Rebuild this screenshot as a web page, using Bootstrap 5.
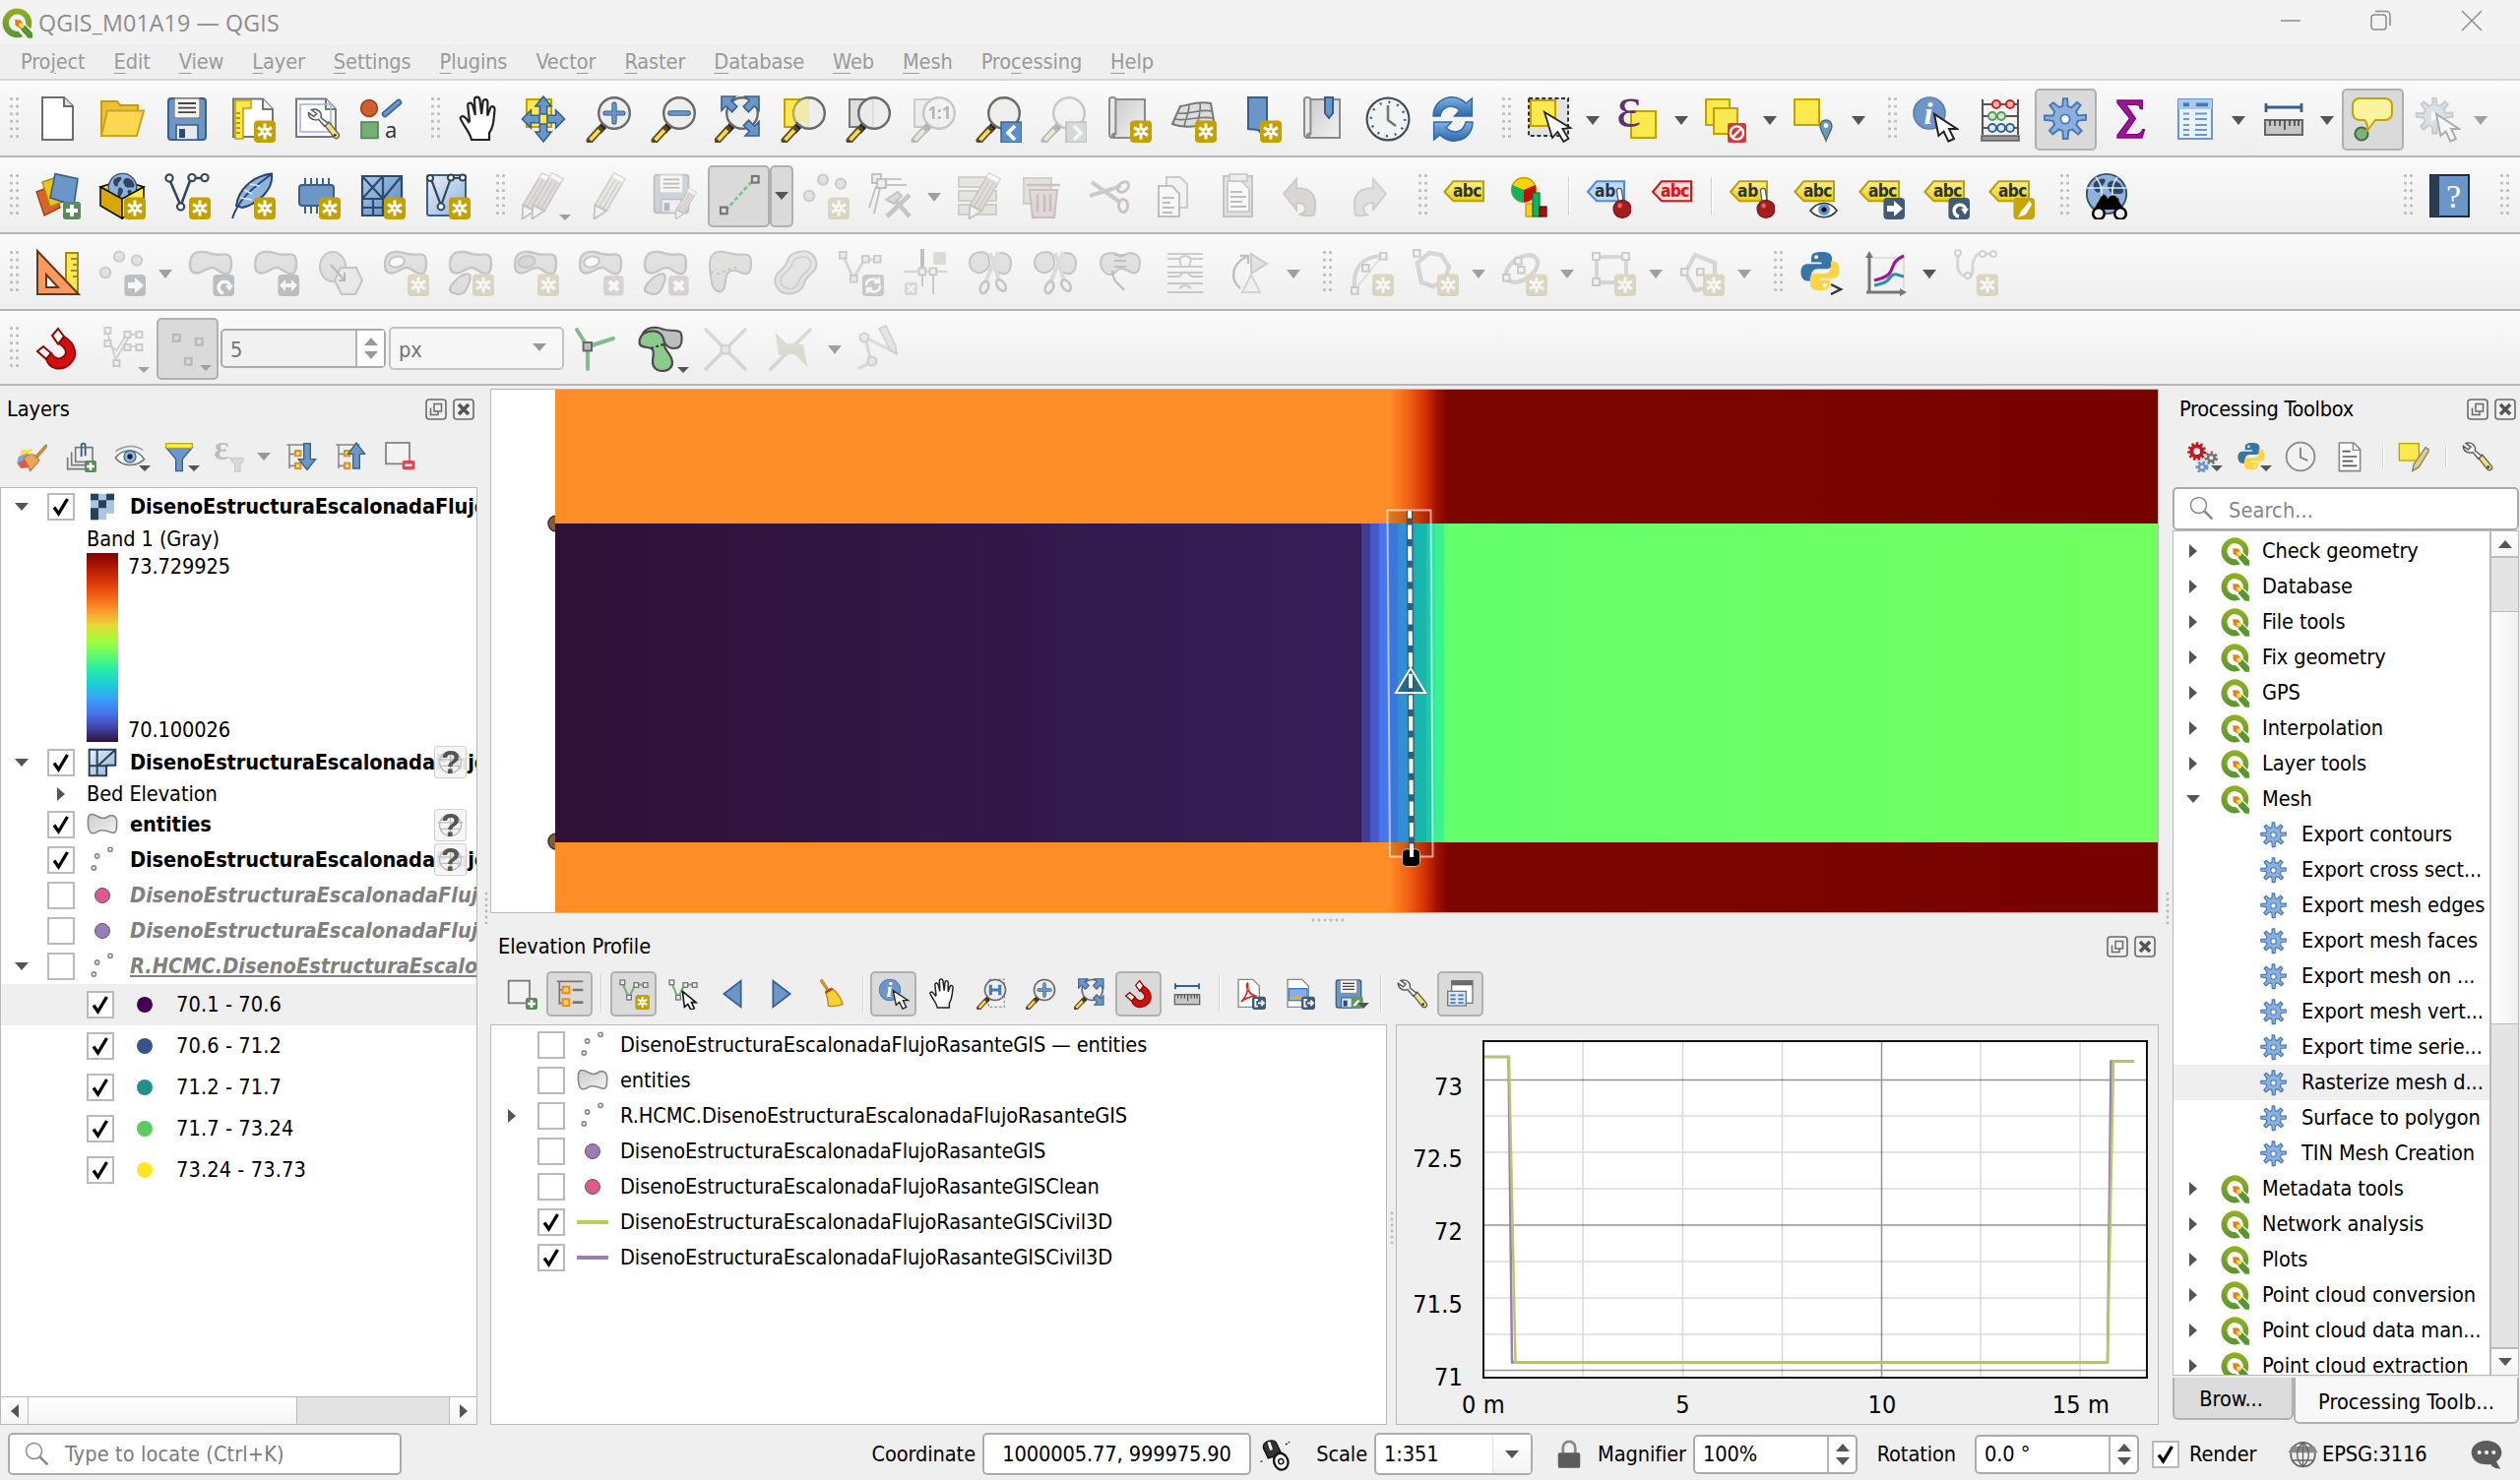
<!DOCTYPE html>
<html lang="en">
<head>
<meta charset="utf-8">
<title>QGIS_M01A19 — QGIS</title>
<link href="https://cdn.jsdelivr.net/npm/bootstrap@5.3.0/dist/css/bootstrap.min.css" rel="stylesheet">
<style>
body{width:2560px;height:1504px;overflow:hidden;background:#efefef;color:#000;font-family:"DejaVu Sans Condensed","DejaVu Sans",sans-serif;font-size:21.6px;line-height:28px;letter-spacing:-.1px}
svg{display:block;flex:none;overflow:visible}
.titlebar{height:45px;background:#f3f3f3;color:#8c8c8c;font:23.2px/30px "Open Sans","Noto Sans",sans-serif;letter-spacing:.15px;padding:1px 0 0 2px}
.winctl{gap:70px;padding-right:38px}
.menubar{height:37px;border-bottom:2px solid #d6d6d6;gap:29px;padding:0 0 0 21px;color:#9a9a9a;letter-spacing:-.12px}
.menubar u{text-underline-offset:4px;text-decoration-thickness:1px}
.tools{height:78px;border-bottom:2px solid #b6b6b6;background:linear-gradient(#fafafa,#eeeeee);padding-top:2px}
.tools.last{height:76px;padding:2px 0 0}
.grip{width:32px;height:44px;flex:none;padding-left:17px}
.grip::before{content:"";display:block;width:9px;height:44px;background:radial-gradient(circle at 1.5px 1.5px,#bdbdbd 1.3px,transparent 1.6px) 0 0/6px 7.6px}
.grip.first{width:25px;padding-left:10px}
.tb{width:66px;height:63px;flex:none;padding:0;border:0;border-radius:0;display:flex;align-items:center;justify-content:center;position:relative}
.tb>svg{width:48px;height:48px}
.tb.dd{width:90px;padding-right:24px}
.tb.dd::after{content:"";border:7.5px solid transparent;border-top:9px solid #555;border-bottom:0;position:absolute;right:6px;top:28px}
.tb.corner::after{content:"";border:6px solid transparent;border-top:6px solid #555;border-bottom:0;position:absolute;right:5px;bottom:7px}
.tb.off>svg{filter:grayscale(.62);opacity:.33}
.tb.off::after{border-top-color:#a0a0a0!important}
.tb.on,.mini.on{background:#dadada;border:2px solid #b0b0b0;border-radius:5px}
.tb.on{width:63px;margin:0 1.5px}
.vsep{width:2px;height:38px;background:#d2d2d2;border-right:1px solid #fff;margin:0 5.5px;flex:none}
.field{background:#fff;border:2px solid #ababab;border-radius:5px;display:flex;align-items:center;flex:none}
.spin{width:29px;align-self:stretch;border-left:2px solid #b5b5b5;display:flex;flex-direction:column;align-items:center;justify-content:center;gap:6px}
.up,.dn,.rt,.lf{width:0;height:0;display:block;flex:none;border:7px solid transparent}
.up{border-top:0;border-bottom:8px solid #555}.dn{border-bottom:0;border-top:8px solid #555}
.rt{border-right:0;border-left:8px solid #555}.lf{border-left:0;border-right:8px solid #555}
.mute .up{border-bottom-color:#999}.mute .dn{border-top-color:#999}
.dockhead{height:46px;padding:1px 0 0 7px}
.split{flex:none;display:flex;align-items:center;justify-content:center}
.split.v::before{content:"";width:4px;height:34px;background:radial-gradient(circle,#b8b8b8 1.3px,transparent 1.7px) 0 0/4px 6px;margin-top:4px}
.split.h{height:13px}.split.h::before{content:"";height:4px;width:34px;background:radial-gradient(circle,#b8b8b8 1.3px,transparent 1.7px) 0 0/6px 4px;margin-left:4px}
.mini{width:50px;height:46px;flex:none;display:flex;align-items:center;justify-content:center;position:relative}
.mini>svg{width:32px;height:32px}
.mini.on{width:47px}
.mini.corner::after{content:"";border:6px solid transparent;border-top:6px solid #555;border-bottom:0;position:absolute;right:4px;bottom:8px}
.mini.off>svg{filter:grayscale(1);opacity:.32}
.pane{background:#fff;border:1.5px solid #b9b9b9;overflow:hidden}
.trow{height:35.8px;display:flex;align-items:center;white-space:nowrap;position:relative;flex:none}
.trow.sub{height:42px;padding-left:87px;letter-spacing:.1px}
.exp{width:47px;flex:none;display:flex;justify-content:center;padding-right:5px}
.ck{width:28px;height:28px;border:2px solid #bababa;background:#fff;flex:none;display:flex;align-items:center;justify-content:center}
.ck svg{width:20px;height:22px}
.ico{width:34px;flex:none;display:flex;justify-content:center;margin:0 11px 0 11px}
.ico svg{width:32px;height:32px}
.bt{font-weight:700;letter-spacing:-.12px}
.gi{font-style:italic;color:#808080;letter-spacing:0}
.dot{width:16px;height:16px;border-radius:50%;border:1.5px solid #5d5570;flex:none}
.sub .dot{border:0;margin:0 24px 0 23px}
.crs{position:absolute;left:440px;top:1px;width:33px;height:33px;border:1px solid #cfcfcf;border-radius:3px;background:rgba(245,245,245,.93)}
.crs svg{width:31px;height:31px}
.turbo{width:32px;height:192px;background:linear-gradient(#7a0402,#b11901,#d93806,#f36315,#fe9b2d,#e5d938,#a4fc3b,#61fc6c,#24eca6,#1bcfd4,#39a2fc,#4675ed,#4145ab,#30123b)}
.hbar{height:28px;border-top:1.5px solid #b9b9b9;background:#e3e3e3}
.knob{background:linear-gradient(#fff,#f4f4f4);display:flex;align-items:center;justify-content:center;flex:none}
.list2 .trow{height:36px}
.proc .exp{width:40px;padding:0}
.proc .ico{width:29px;margin:0 13px 0 8px}
.proc .ico svg{width:29px;height:29px}
.proc .kid .ico{margin-left:0;margin-right:14px}
.proc .kid .exp{width:87px}
.proc .trow{height:36px}
.vbar{width:29px;border-left:2px solid #bbb;background:#e4e4e4;flex:none;display:flex;flex-direction:column}
.dtab{border:2px solid #b2b2b2;border-top:0;border-radius:0 0 6px 6px;display:flex;align-items:center;justify-content:center}
.status>*{flex:none}
</style>
<script src="https://cdn.jsdelivr.net/npm/bootstrap@5.3.0/dist/js/bootstrap.bundle.min.js"></script>
</head>
<body class="d-flex flex-column">

<svg width="0" height="0" class="position-absolute">
<defs>
<linearGradient id="gGreen" x1="0" y1="0" x2="0" y2="1"><stop offset="0" stop-color="#93b023"/><stop offset="1" stop-color="#589632"/></linearGradient>
<linearGradient id="gGrey" x1="0" y1="0" x2="1" y2="1"><stop offset="0" stop-color="#ccc"/><stop offset="1" stop-color="#f2f2f2"/></linearGradient>
<linearGradient id="gBlue" x1="0" y1="0" x2="1" y2="1"><stop offset="0" stop-color="#a9c7e8"/><stop offset="1" stop-color="#5b8bc0"/></linearGradient>
<linearGradient id="gLb" x1="0" y1="0" x2="1" y2="1"><stop offset="0" stop-color="#e9f0fa"/><stop offset="1" stop-color="#8eb0dc"/></linearGradient>
<linearGradient id="gYel" x1="0" y1="0" x2="0" y2="1"><stop offset="0" stop-color="#fcf08a"/><stop offset="1" stop-color="#e8cf1e"/></linearGradient>
<linearGradient id="gRefresh" x1="0" y1="0" x2="0" y2="1"><stop offset="0" stop-color="#7fb0e0"/><stop offset="1" stop-color="#2f68ad"/></linearGradient>
</defs>
<!-- badges -->
<symbol id="bNew" viewBox="0 0 24 24"><rect x="13" y="12.700" width="11" height="11.300" rx="2" fill="#c4a000"/><path d="M18.500 14.300v8M15 16.300l7 4M22 16.300l-7 4" stroke="#fff" stroke-width="1.500"/><circle cx="18.500" cy="18.300" r="1.800" fill="#fff"/><circle cx="18.500" cy="18.300" r=".7" fill="#c4a000"/></symbol>
<symbol id="bAdd" viewBox="0 0 24 24"><rect x="15" y="15" width="9" height="9" rx="1.500" fill="#5a8c5a"/><path d="M19.500 16.500v6M16.500 19.500h6" stroke="#fff" stroke-width="2"/></symbol>
<symbol id="bDel" viewBox="0 0 24 24"><rect x="13.500" y="13.500" width="10.300" height="10.300" rx="2" fill="#c08a9c"/><path d="M16.500 16.500l4.500 4.500M21 16.500l-4.500 4.500" stroke="#fff" stroke-width="2.200"/></symbol>
<symbol id="bMove" viewBox="0 0 24 24"><rect x="13.200" y="13" width="10.800" height="11" rx="2" fill="#415a75"/><path d="M15 17h3.500v-2.500l4.500 4-4.500 4V20H15z" fill="#fff"/></symbol>
<symbol id="bRot" viewBox="0 0 24 24"><rect x="13.200" y="13" width="10.800" height="11" rx="2" fill="#415a75"/><path d="M18.500 22.500a3 3 0 0 1-1-5.500 3 3 0 0 1 4.500 2.200" fill="none" stroke="#fff" stroke-width="1.700"/><path d="M19.500 18.500h4l-2 3z" fill="#fff"/></symbol>
<symbol id="bLR" viewBox="0 0 24 24"><rect x="13.200" y="13" width="10.800" height="11" rx="2" fill="#555"/><path d="M14 18.500l3-3v2h3v-2l3 3-3 3v-2h-3v2z" fill="#fff"/></symbol>
<symbol id="bExp" viewBox="0 0 24 24"><rect x="13.500" y="14" width="10.500" height="10" rx="2" fill="#415a75"/><path d="M18 16.500h-2v5h2M18 19h4M20.500 17l2 2-2 2" stroke="#fff" stroke-width="1.400" fill="none"/></symbol>
<symbol id="glass" viewBox="0 0 24 24"><path d="M10.500 14.500L7 18.300" stroke="#222" stroke-width="3.600"/><path d="M7.600 17.300l-5 5.500" stroke="#5a4a20" stroke-width="3.600" stroke-linecap="round"/><path d="M7.400 17.600l-4.600 5" stroke="#fcd94f" stroke-width="1.900"/><circle cx="15" cy="9" r="7.900" fill="#ededeb" fill-opacity=".88" stroke="#6a6a6a" stroke-width="1.200"/></symbol>
<symbol id="pencil" viewBox="0 0 24 24"><path d="M14.800.5l5.700 2.800L11 19.700l-5.800-3z" fill="#d6cba6" stroke="#8d8560" stroke-width=".9"/><path d="M16.800 1.500L7.200 17.700M18.700 2.500L9.200 18.700" stroke="#8d8560" stroke-width=".7"/><path d="M14.800.5l5.700 2.800-1.300 2.200-5.700-2.800z" fill="#fff" stroke="#aaa" stroke-width=".6"/><path d="M5.200 16.700L11 19.700l-6.300 4.100z" fill="#f6f6f2" stroke="#666" stroke-width=".9"/></symbol>
<symbol id="pencilr" viewBox="0 0 24 24"><path d="M14.800.5l5.700 2.800L11 19.700l-5.800-3z" fill="#cfa999" stroke="#8d6a60" stroke-width=".9"/><path d="M16.800 1.500L7.200 17.700M18.700 2.500L9.200 18.700" stroke="#8d6a60" stroke-width=".7"/><path d="M14.800.5l5.700 2.800-1.300 2.200-5.700-2.800z" fill="#fff" stroke="#aaa" stroke-width=".6"/><path d="M5.200 16.700L11 19.700l-6.300 4.100z" fill="#f6f6f2" stroke="#666" stroke-width=".9"/></symbol>
<symbol id="cursor" viewBox="0 0 24 24"><path d="M9.500 9.500l2.200 11 2.600-2.200 2.400 5 2.800-1.300-2.500-5h4z" fill="#fff" stroke="#222" stroke-width="1"/></symbol>
<symbol id="blob" viewBox="0 0 24 24"><path d="M1.500 8C1.500 3 4 1 8.500 1.500c4 .5 5 1.800 9 1.300 4-.5 5 .7 5 4.700 0 5-2 6-5 4.500-3-1.500-3.500-3.500-7-2-3 1.500-4.500 2.700-6.500 2.200C2.200 11.800 1.500 10 1.500 8z" fill="#b4b8b2" stroke="#666" stroke-width="1.200"/></symbol>
<symbol id="tag" viewBox="0 0 24 24"><g transform="translate(-.8 0)"><path d="M2 10L6.500 4.600h15.300v10H6.500z" fill="url(#gYel)" stroke="#b9a006"/><text x="6.300" y="12.500" font-size="8.600" font-weight="700" letter-spacing="-.3" font-family="DejaVu Sans Condensed, sans-serif" fill="#2d3339">abc</text></g></symbol>
<symbol id="pin" viewBox="0 0 24 24"><path d="M18 9.500l1 7" stroke="#555" stroke-width="3.200" stroke-linecap="round"/><path d="M18 9.500l1 7" stroke="#fff" stroke-width="1.900" stroke-linecap="round"/><circle cx="19.500" cy="18.700" r="4.500" fill="#a31d20" stroke="#7d1315" stroke-width=".6"/><circle cx="18.300" cy="17" r="1.200" fill="#e0686a"/></symbol>
<!-- logo -->
<symbol id="qgis" viewBox="0 0 24 24"><path fill-rule="evenodd" d="M12 .3a11.600 11.600 0 1 0 4.500 22.300l-3.600-4.200A6.700 6.700 0 1 1 18.600 13l3.800 3.600A11.600 11.600 0 0 0 12 .3z" fill="url(#gGreen)"/><path d="M15.500 13.700l2.700-.2L24 19.500v4.300h-4.200l-5.300-6z" fill="#589632"/><path d="M14.500 12.800l3.700-.2 6 6.700M14 17l6.200 7" stroke="#fff" stroke-width=".8" fill="none"/><path d="M10.200 9.300l4.500.3 2.200 3.500-2.500 3.200-3.900-2.500z" fill="#ee7913"/><path d="M13.500 12l2.800.2 1.500 2-1.800 2-2.700-1.700z" fill="#f0e64a"/></symbol>
<!-- project -->
<symbol id="new" viewBox="0 0 24 24"><path d="M4.500 1h11L20 5.500V22.500H4.500z" fill="#fff" stroke="#6d6d6d"/><path d="M15.500 1v4.500H20" fill="#ddd" stroke="#6d6d6d"/></symbol>
<symbol id="open" viewBox="0 0 24 24"><path d="M1.500 20V3h8l1.500 2h9v4" fill="#e9c236" stroke="#c59a18"/><path d="M1.500 20.500L4.500 7.700h18.500l-3.500 12.800z" fill="#fcd750" stroke="#c9a227"/></symbol>
<symbol id="save" viewBox="0 0 24 24"><rect x="2.500" y="1.500" width="19" height="21" rx="1.500" fill="#6c96c8" stroke="#34608f"/><rect x="5.500" y="1.500" width="13" height="10" rx="1" fill="#f4f4f0" stroke="#888" stroke-width=".7"/><path d="M7.500 4h9M7.500 6.300h9M7.500 8.600h9" stroke="#444" stroke-width=".9"/><path d="M6.500 22.500V15h11v7.500z" fill="#e6e9ee" stroke="#34608f" stroke-width=".8"/><rect x="8" y="17" width="3" height="4.500" fill="#284a73"/></symbol>
<symbol id="layout" viewBox="0 0 24 24"><path d="M2.500 1.800h15L22.500 7v14H2.500z" fill="#fff" stroke="#777"/><path d="M17.500 1.800V7h5" fill="#eee" stroke="#777"/><path d="M3.500 2.500h8v4h-4V22h-4z" fill="#fce94f" stroke="#c4a000" stroke-width=".8"/><path d="M4 9h2M4 11.500h2M4 14h2M4 16.500h2M4 19h2" stroke="#a08000" stroke-width=".8"/><use href="#bNew"/></symbol>
<symbol id="wrench" viewBox="0 0 24 24"><path d="M12.500 13l3-2.500 7 8.500c1.500 2-1 4.500-3 2.800z" fill="#f0df7a" stroke="#555" stroke-width=".9"/><path d="M3 1.800C7 .3 11 3.500 9.900 7.400l5.100 4-2.500 2.300-4.300-5C4.500 10 .8 7.500 1 4l3.800 2.600 2-2z" fill="#f3f3f3" stroke="#555"/><circle cx="20" cy="20" r="1" fill="#333"/></symbol>
<symbol id="layoutmgr" viewBox="0 0 24 24"><path d="M1.500 1.800h15L21.500 7v14H1.500z" fill="#fff" stroke="#777"/><path d="M16.500 1.800V7h5" fill="#eee" stroke="#777"/><rect x="3.500" y="4.500" width="15.500" height="14" fill="none" stroke="#9fb6e8" stroke-width=".8"/><use href="#wrench" x="7" y="5.500" width="17" height="18"/></symbol>
<symbol id="style" viewBox="0 0 24 24"><circle cx="5.500" cy="6.500" r="4.200" fill="#cf5f2f" stroke="#a34213" stroke-width=".8"/><path d="M20.500 3.500l-7 6" stroke="#34608f" stroke-width="3.200" stroke-linecap="round"/><path d="M20.500 3.500l-7 6" stroke="#6c96c8" stroke-width="1.800" stroke-linecap="round"/><rect x="1.500" y="13.500" width="8.500" height="8.200" fill="#78ad78" stroke="#4e834e" stroke-width=".8"/><text x="13.500" y="21.700" font-size="11" fill="#333" font-family="Noto Sans">a</text></symbol>
<!-- navigation -->
<symbol id="hand" viewBox="0 0 24 24"><path transform="translate(1 0)" d="M7.500 22.500C6.500 18 3 15 1.800 11.500c.8-2 2.700-.7 4.200 2L6.500 13 5.600 5c.3-1.700 2-1.500 2.500 0l1.300 5L9 2c.3-1.600 2.400-1.600 2.700 0l.9 7.500.7-6.500c.5-1.400 2.200-1.200 2.400.3l-.1 7 1.500-4c.7-1.300 2.300-.6 2.200.8-.6 6-.7 9-2.800 12v3.400z" fill="#fff" stroke="#222" stroke-width="1.100"/></symbol>
<symbol id="pan" viewBox="0 0 24 24"><rect x="3.500" y="2" width="12.500" height="14" fill="#fce94f" stroke="#c4a000"/><path d="M12 .5L16 5.500h-2.200v4h-3.600v-4H8zM12 23.500l4-5h-2.200v-4h-3.600v4H8zM1.200 12l4.500-4.500v2.600h4.300v3.800H5.700v2.600zM22.800 12l-4.500-4.500v2.600H14v3.800h4.300v2.600z" fill="#6c96c8" stroke="#34608f" stroke-width=".8"/></symbol>
<symbol id="zin" viewBox="0 0 24 24"><use href="#glass"/><path d="M15 4.500v9M10.500 9h9" stroke="#34608f" stroke-width="2.600" stroke-linecap="round"/><path d="M15 4.500v9M10.500 9h9" stroke="#6c96c8" stroke-width="1.600" stroke-linecap="round"/></symbol>
<symbol id="zout" viewBox="0 0 24 24"><use href="#glass"/><path d="M10.500 9h9" stroke="#34608f" stroke-width="2.800" stroke-linecap="round"/><path d="M10.500 9h9" stroke="#6c96c8" stroke-width="1.700" stroke-linecap="round"/></symbol>
<symbol id="zfull" viewBox="0 0 24 24"><use href="#glass" x="-1"/><path d="M3.500.5h7L8.400 2.600l3 3-2.600 2.800-3-3-2.300 2.300zM22.500.5v7.200l-2.300-2.300-3 3-2.600-2.800 3-3L15.500.5zM22.500 20.500h-7l2.200-2.200-3-3 2.600-2.700 3 3 2.200-2.300z" fill="#6c96c8" stroke="#34608f" stroke-width=".8"/></symbol>
<symbol id="zsel" viewBox="0 0 24 24"><rect x="2.500" y="2" width="12" height="14" fill="#fce94f" stroke="#c4a000"/><use href="#glass"/><path d="M8 4.500a8 8 0 0 0 0 9h6.500v-12A8 8 0 0 0 8 4.500z" fill="#f2e98e" opacity=".6"/></symbol>
<symbol id="zlay" viewBox="0 0 24 24"><rect x="2.500" y="2" width="12" height="14" fill="#ddd" stroke="#777"/><use href="#glass"/></symbol>
<symbol id="z11" viewBox="0 0 24 24"><rect x="2.500" y="2" width="12" height="14" fill="#ddd" stroke="#777"/><use href="#glass"/><text x="9.300" y="12" font-size="8.500" font-weight="700" font-family="Noto Sans" fill="#333">1:1</text></symbol>
<symbol id="zprev" viewBox="0 0 24 24"><use href="#glass"/><rect x="13.500" y="13.500" width="10.500" height="10.500" fill="#5a8fcc" stroke="#34608f" stroke-width=".7"/><path d="M20.500 15.500l-3.500 3.500 3.500 3.500" stroke="#fff" stroke-width="1.900" fill="none"/></symbol>
<symbol id="znext" viewBox="0 0 24 24"><use href="#glass"/><rect x="13.500" y="13.500" width="10.500" height="10.500" fill="#8aa" stroke="#555" stroke-width=".7"/><path d="M17.500 15.500l3.500 3.500-3.500 3.500" stroke="#fff" stroke-width="1.900" fill="none"/></symbol>
<symbol id="map" viewBox="0 0 24 24"><path d="M5 2h15.500v19.500H5z" fill="url(#gGrey)" stroke="#8a8a8a"/><path d="M2.500 2c0-1.300 3.200-1.300 3.200 0v17.500c-1.500-.5-2 .3-1.500 2-1 0-1.700-.5-1.700-1.700z" fill="#e8e8e8" stroke="#8a8a8a"/></symbol>
<symbol id="newmap" viewBox="0 0 24 24"><use href="#map"/><use href="#bNew"/></symbol>
<symbol id="new3d" viewBox="0 0 24 24"><path d="M5.500 5.500c5-.5 8-3 15.500-1.500l2 11.500c-6-2-12 2.500-21.500-1z" fill="#ddd" stroke="#777"/><path d="M4.500 9c6 1 11-2.500 17-1M3 12c6 1.500 12-2 19-.5M10 5c0 4-2 7-2.500 11M15.500 3.600c.5 4-.5 8-1.500 11" stroke="#777" fill="none" stroke-width=".8"/><use href="#bNew"/></symbol>
<symbol id="bmnew" viewBox="0 0 24 24"><path d="M7 1h9.500v21L12 17.500 7 17z" fill="#6c96c8" stroke="#34608f"/><use href="#bNew"/></symbol>
<symbol id="bms" viewBox="0 0 24 24"><use href="#map"/><path d="M13 1h4v8l-2 2.500L13 9z" fill="#6c96c8" stroke="#34608f"/></symbol>
<symbol id="clock" viewBox="0 0 24 24"><circle cx="12" cy="12" r="10.700" fill="#f2f4f4" stroke="#415058" stroke-width="1.100"/><circle cx="12" cy="12" r="8.600" fill="none" stroke="#415a75" stroke-width="1.200" stroke-dasharray="1 3.500"/><path d="M12 5v7.500l4 3" stroke="#777" stroke-width="1.300" fill="none"/></symbol>
<symbol id="refresh" viewBox="0 0 24 24"><path d="M2 10.500C2 1 13-2 18.500 4L21.700 1.500v9h-9L15.500 7.500c-4-3.500-9-2-10 3z" fill="url(#gRefresh)" stroke="#2f68ad" stroke-width=".7"/><path d="M22 13.500c0 9.500-11 12.500-16.500 6.500l-3.200 2.500v-9h9L8.500 16.500c4 3.500 9 2 10-3z" fill="url(#gRefresh)" stroke="#2f68ad" stroke-width=".7"/></symbol>
<!-- selection -->
<symbol id="sel" viewBox="0 0 24 24"><rect x="1.500" y="1.500" width="20" height="19" fill="#e2e2e2" stroke="#333" stroke-dasharray="2 1.300"/><rect x="2.500" y="2.500" width="12.500" height="13" fill="#fce94f" stroke="#c4a000"/><path d="M9.500 8.500l4 13 2.700-3 3 5 2.500-1.500-3-5 4-.5z" fill="#fff" stroke="#222" stroke-width=".9"/></symbol>
<symbol id="selexp" viewBox="0 0 24 24"><rect x="8.500" y="8" width="12.500" height="13.500" fill="#fce94f" stroke="#c4a000"/><text x="1" y="15.300" font-size="30" font-family="Liberation Serif" fill="#5c3566">ε</text></symbol>
<symbol id="desel" viewBox="0 0 24 24"><rect x="1.500" y="2" width="12" height="13" fill="#fce94f" stroke="#c4a000"/><rect x="5.500" y="6.500" width="12" height="13" fill="#fce94f" stroke="#c4a000"/><rect x="12.500" y="14" width="9.500" height="10" rx="1.300" fill="#d9383a"/><circle cx="17.200" cy="19" r="3.300" fill="none" stroke="#fff" stroke-width="1.200"/><path d="M15 21.300l4.500-4.600" stroke="#fff" stroke-width="1.200"/></symbol>
<symbol id="selloc" viewBox="0 0 24 24"><rect x="1.500" y="2" width="12.500" height="13" fill="#fce94f" stroke="#c4a000"/><path d="M17.500 23c-1.500-4-3-5.500-3-7.500a3 3 0 0 1 6 0c0 2-1.500 3.500-3 7.500z" fill="#7095b5" stroke="#456a8a" stroke-width=".7"/><circle cx="17.500" cy="15.300" r="1.200" fill="#fff"/></symbol>
<symbol id="ident" viewBox="0 0 24 24"><circle cx="9" cy="9" r="8" fill="#6c96c8" stroke="#5580b4" stroke-width=".8"/><text x="6.300" y="14.500" font-size="16" font-style="italic" font-weight="700" font-family="Liberation Serif" fill="#fff">i</text><use href="#cursor" x="2"/></symbol>
<symbol id="abacus" viewBox="0 0 24 24"><path d="M3 2v18M21 2v18M3 4.500h18M3 10.500h18M3 16.500h18" stroke="#555"/><g stroke-width="1"><circle cx="10" cy="4.500" r="2" fill="#f3b7b7" stroke="#c22"/><circle cx="17" cy="4.500" r="2" fill="#f3b7b7" stroke="#c22"/><circle cx="8" cy="10.500" r="2" fill="#cdeccd" stroke="#5a9a5a"/><circle cx="12.500" cy="10.500" r="2" fill="#cdeccd" stroke="#5a9a5a"/><circle cx="8" cy="16.500" r="2" fill="#dceafa" stroke="#34608f"/><circle cx="12.500" cy="16.500" r="2" fill="#dceafa" stroke="#34608f"/><circle cx="17" cy="16.500" r="2" fill="#dceafa" stroke="#34608f"/></g><rect x="2.500" y="20.500" width="19" height="2.500" fill="#999" stroke="#555" stroke-width=".7"/></symbol>
<symbol id="gear" viewBox="0 0 24 24"><g fill="#8cb0de" stroke="#4479ba" stroke-width="1"><path d="M10.700 5L11 1.200h2l.3 3.800 1.900.8L18 3l1.800 1.600L17.500 7.800l1 2 4-.3v2.500l-4 .4-.9 2.200 2.700 3-1.800 1.700-3-2.500-1.900.8-.3 4h-2.300l-.3-4-2-.8-3 2.500L4 17.500l2.600-3-.8-2L1.500 12V9.800l4.300.1.900-2L4.200 4.700 6 3.200l2.900 2.500z" transform="translate(0 .4)"/></g><circle cx="12" cy="12" r="2.300" fill="#f5f8fc" stroke="#4479ba" stroke-width=".9"/></symbol>
<symbol id="sigma" viewBox="0 0 24 24"><path d="M5.500 2.500h12.700v4.300h-1c-.4-1.900-1-2.200-2.700-2.200H9.700l5 7.200-5.600 8h6c2 0 2.700-.8 3.300-2.500h.8L18 21.500H5.500v-1.200l6.300-8.600-6.300-8z" fill="#a1109f" stroke="#750e74" stroke-width=".7"/></symbol>
<symbol id="table" viewBox="0 0 24 24"><rect x="3.500" y="2" width="17" height="20" fill="#e9f1fa" stroke="#6c96c8"/><rect x="3.500" y="2" width="17" height="5" fill="#a9c9ee"/><path d="M6 4.700h3M12.500 4.700h6" stroke="#4479ba" stroke-width="1.800"/><path d="M6 9.300h3M12 9.300h6M6 12h3M12 12h6M6 15h3M12 15h6M6 17.500h3M12 17.500h6M6 20h3M12 20h6" stroke="#6c96c8" stroke-width="1"/></symbol>
<symbol id="ruler" viewBox="0 0 24 24"><path d="M3 6h18M3 4v4.500M21 4v4.500" stroke="#34608f" stroke-width="1.400"/><rect x="2.500" y="12.500" width="19" height="7.500" fill="#c6c6c6" stroke="#666"/><path d="M5 12.500v3M7.500 12.500v3M10 12.500v3M12.500 12.500v5M15 12.500v3M17.500 12.500v3M19.500 12.500v3" stroke="#444" stroke-width=".8"/></symbol>
<symbol id="tip" viewBox="0 0 24 24"><circle cx="6.500" cy="19.500" r="3.300" fill="#7db27d" stroke="#3d6e3d"/><path d="M5.500 1.500h13a3.500 3.500 0 0 1 3.500 3.500v4a3.500 3.500 0 0 1-3.500 3.500h-5l-4.500 6c1-3 .5-4.500-1-6H5.500A3.500 3.500 0 0 1 2 9V5a3.500 3.500 0 0 1 3.500-3.500z" fill="#fbf3a0" stroke="#c4a500"/></symbol>
<symbol id="gearrun" viewBox="0 0 24 24"><g transform="scale(.88)"><use href="#gear" width="24" height="24"/></g><circle cx="10.500" cy="10.500" r="5.200" fill="#a8b4c0"/><path d="M9 7.500l4.500 3-4.500 3z" fill="#fff"/><use href="#cursor" x="2"/></symbol>
<!-- data sources -->
<symbol id="dsrc" viewBox="0 0 24 24"><path d="M1.500 10l8-3 4 11-8 4z" fill="#d9622b" stroke="#a34213" stroke-width=".7"/><path d="M4.500 5l9-3 4 12-9 3.500z" fill="#efc51a" stroke="#b08d00" stroke-width=".7"/><path d="M11 .8l11.500 2.500-2 13.500L8.500 13z" fill="#6c96c8" stroke="#34608f" stroke-width=".8"/><use href="#bAdd"/></symbol>
<symbol id="globe" viewBox="0 0 24 24"><circle cx="12" cy="12" r="11" fill="#8fb2dd" stroke="#34506f"/><path d="M5 6c2-2 5-3 6-2s-1 3-2 4 0 2-1 3-4-1-3-5zM9 12c3 0 4 2 3 4s-2 4-3 4-1-5 0-8zM14 5c3-1 6 1 7 4s-1 3-3 3-4 0-5-3 0-3 1-4zM17 14c2 0 3 1 1 3s-3-3-1-3z" fill="#2d4763"/></symbol>
<symbol id="gpkg" viewBox="0 0 24 24"><path d="M1 7.500L12 4l11 3.500-11 6z" fill="#e9d22f" stroke="#000" stroke-width=".8"/><use href="#globe" x="4.500" y="0" width="15.500" height="15.500"/><path d="M1 7.500l11 6V23.500L1 17z" fill="#d9a800" stroke="#111" stroke-width=".8"/><path d="M23 7.500l-11 6V23.500L23 17z" fill="#fdee3f" stroke="#111" stroke-width=".8"/><use href="#bNew"/></symbol>
<symbol id="shp" viewBox="0 0 24 24"><path d="M3 3.500L8.800 17 14 3h6" stroke="#33475b" stroke-width="1.300" fill="none"/><g fill="#fff" stroke="#33475b" stroke-width="1.100"><circle cx="3" cy="3" r="1.800"/><circle cx="8.800" cy="17.500" r="1.800"/><circle cx="14.500" cy="2.800" r="1.800"/><circle cx="21" cy="2.800" r="1.800"/></g></symbol>
<symbol id="newshp" viewBox="0 0 24 24"><use href="#shp"/><use href="#bNew"/></symbol>
<symbol id="feather" viewBox="0 0 24 24"><path d="M22 .8C12 2 5 9 4 17l3 1c8-2 16-9 15-17.200z" fill="#8fb4e0" stroke="#26456a"/><path d="M22 1C12 8 5 14 2 23.500" stroke="#26456a" fill="none"/><path d="M8 9l4 2M11 6l5 1M6 13l6 1" stroke="#dfeaf7" stroke-width=".8"/><use href="#bNew"/></symbol>
<symbol id="chip" viewBox="0 0 24 24"><path d="M6 3v18M9 3v18M12 3v18M15 3v18M18 3v18" stroke="#34506f" stroke-width=".9"/><rect x="3" y="6.500" width="17.500" height="10.500" rx="1.500" fill="#6c96c8" stroke="#34608f"/><use href="#bNew"/></symbol>
<symbol id="meshnew" viewBox="0 0 24 24"><rect x="2" y="2" width="20" height="20" fill="url(#gBlue)"/><path d="M2 2h20v20H2zM12.500 2v20M2 13.500h20M2 2l10.500 11.500M12.500 2L2 13.500M22 2l-9.500 11.500M7.500 13.500V22M2 18h20" stroke="#2b4a6e" fill="none" stroke-width="1.100"/><use href="#bNew"/></symbol>
<symbol id="virt" viewBox="0 0 24 24"><rect x="2" y="1.500" width="19.500" height="20.500" rx="1" fill="url(#gLb)" stroke="#34608f"/><path d="M4 3.500L9 17 14 3h6" stroke="#33475b" fill="none" stroke-width="1.100"/><g fill="#fff" stroke="#33475b"><circle cx="9" cy="17.500" r="1.700"/><circle cx="3.500" cy="3" r="1.500"/><circle cx="14" cy="2.800" r="1.500"/><circle cx="20" cy="2.800" r="1.500"/></g><use href="#bNew"/></symbol>
<!-- digitizing -->
<symbol id="pencils" viewBox="0 0 24 24"><use href="#pencilr" x="-3.500"/><use href="#pencilr" x="1.500"/></symbol>
<symbol id="pencil1" viewBox="0 0 24 24"><use href="#pencil"/></symbol>
<symbol id="savee" viewBox="0 0 24 24"><use href="#save" x="0" y="0" width="22" height="22"/><use href="#pencilr" x="10" y="8" width="16" height="16"/></symbol>
<symbol id="addline" viewBox="0 0 24 24"><path d="M5.500 19.500L19 4.500" stroke="#7bc48b" stroke-width="1.400" stroke-dasharray="2.200 1.300"/><g fill="#ddd" stroke="#777" stroke-width="1.100"><rect x="3" y="17.800" width="3.300" height="3.300"/><rect x="19" y="2" width="3.300" height="3.300"/></g></symbol>
<symbol id="pts" viewBox="0 0 24 24"><g fill="#bbb" stroke="#777"><circle cx="10.500" cy="3.800" r="2.600"/><circle cx="3.500" cy="12" r="2.600"/><circle cx="19.500" cy="5.800" r="2.600"/></g></symbol>
<symbol id="addpt" viewBox="0 0 24 24"><use href="#pts"/><use href="#bNew"/></symbol>
<symbol id="mvpt" viewBox="0 0 24 24"><use href="#pts"/><use href="#bMove"/></symbol>
<symbol id="vertex" viewBox="0 0 24 24"><path d="M5 3.500h12.500M8 6.500h12M4.500 7L1 18M6.500 8L3.500 21" stroke="#666" fill="none"/><rect x="2.500" y="1" width="4.500" height="4.500" fill="#ddd" stroke="#555"/><rect x="5" y="3.500" width="4.500" height="4.500" fill="#ddd" stroke="#555"/><path d="M13 13l8.500 9.500M21.500 11.500L10 22.500" stroke="#776f4c" stroke-width="2.300"/><path d="M9.500 14l6-4 2 2-4 4z" fill="#aaa" stroke="#666"/></symbol>
<symbol id="multi" viewBox="0 0 24 24"><path d="M1.500 2.500h19v5h-19zM1.500 9.500h19v5h-19zM1.500 16.500h19v5h-19z" fill="#cfc98c" stroke="#8c8860"/><use href="#pencilr" x="2"/></symbol>
<symbol id="trash" viewBox="0 0 24 24"><path d="M1.500 3h14v13h-14z" fill="#cbb9a0" stroke="#9a8468"/><path d="M4.500 9h14l-1.500 14H6z" fill="#dba0a0" stroke="#a04d4d"/><path d="M3 6.500h17M8.500 11v9M12 11v9M15 11v9" stroke="#a04d4d" stroke-width="1.300"/></symbol>
<symbol id="scis" viewBox="0 0 24 24"><path d="M3 5l14 10M2 12l16-5" stroke="#777" stroke-width="2"/><ellipse cx="19" cy="7.500" rx="3.200" ry="2.200" transform="rotate(-40 19 7.500)" fill="none" stroke="#8d6060" stroke-width="1.500"/><ellipse cx="19" cy="17" rx="2.300" ry="3.200" fill="none" stroke="#8d6060" stroke-width="1.500"/></symbol>
<symbol id="copy" viewBox="0 0 24 24"><path d="M8 2.500h7L18.500 6v12H8z" fill="#eee" stroke="#777"/><path d="M4 7h7l3.500 4v11.500H4z" fill="#fff" stroke="#555"/><path d="M6 13h6M6 15.500h4M6 18h6M6 20.500h5" stroke="#555" stroke-width=".9"/></symbol>
<symbol id="paste" viewBox="0 0 24 24"><rect x="4" y="2" width="14.500" height="20.500" fill="#bbb" stroke="#666"/><path d="M6 4.500h7l4 4V20H6z" fill="#fff" stroke="#666" stroke-width=".8"/><rect x="7" y="1" width="9" height="3.500" fill="#ddd" stroke="#666" stroke-width=".8"/><path d="M7.500 10h6M7.500 12.500h8M7.500 15h6M7.500 17.500h8" stroke="#555" stroke-width=".9"/></symbol>
<symbol id="undo" viewBox="0 0 24 24"><path d="M1.500 11L8 3.500V8c8 0 11 4 9 13.500-1.500.8-5 .8-7 0 4-1.500 3.500-6-2-6v3.500z" fill="#b5998a" stroke="#94766a"/></symbol>
<symbol id="redo" viewBox="0 0 24 24"><path d="M20.500 11L14 3.500V8c-8 0-11 4-9 13.500 1.500.8 4 .8 6 0-3-2-2.500-6 3-6v3.500z" fill="#b0b8b0" stroke="#888"/></symbol>
<!-- labels -->
<symbol id="abc" viewBox="0 0 24 24"><use href="#tag"/></symbol>
<symbol id="pie" viewBox="0 0 24 24"><circle cx="8.500" cy="9" r="6.200" fill="#ffd500" stroke="#d0a000" stroke-width=".8"/><path d="M8.500 9L2.800 6.500A6.200 6.200 0 0 0 8.500 15.200z" fill="#12b35a"/><path d="M8.500 9l5.700-2.500a6.200 6.200 0 0 1-5.700 8.700z" fill="#c20d0d"/><rect x="9.500" y="16" width="3.500" height="6.500" fill="#ffd500" stroke="#d09000" stroke-width=".6"/><rect x="13" y="10.500" width="3.500" height="12" fill="#12b35a" stroke="#067035" stroke-width=".6"/><rect x="16.500" y="17.500" width="3.500" height="5" fill="#b00c0c" stroke="#600" stroke-width=".6"/></symbol>
<symbol id="lpinb" viewBox="0 0 24 24"><path d="M1.500 10L6 4.600h14v10H6z" fill="#b9daf8" stroke="#4c8fd8"/><text x="5" y="12.500" font-size="8.600" font-weight="700" font-family="DejaVu Sans Condensed" fill="#2d3339">ab</text><use href="#pin" x="-.5"/></symbol>
<symbol id="abcr" viewBox="0 0 24 24"><path d="M1.500 10L6 4.600h15v10H6z" fill="#fdd" stroke="#e01010"/><text x="5.500" y="12.500" font-size="8.600" font-weight="700" letter-spacing="-.3" font-family="DejaVu Sans Condensed" fill="#e01010">abc</text></symbol>
<symbol id="lpin" viewBox="0 0 24 24"><path d="M1.500 10L6 4.600h14v10H6z" fill="url(#gYel)" stroke="#b9a006"/><text x="5" y="12.500" font-size="8.600" font-weight="700" font-family="DejaVu Sans Condensed" fill="#2d3339">ab</text><use href="#pin"/></symbol>
<symbol id="leye" viewBox="0 0 24 24"><use href="#tag"/><path d="M9 19.500c4-5 10-5 13.500 0-3.500 4.500-9.500 4.500-13.500 0z" fill="#fff" stroke="#333" stroke-width=".8"/><circle cx="16" cy="19" r="3" fill="#5e96d8"/><circle cx="16" cy="19" r="1.300" fill="#000"/></symbol>
<symbol id="lmove" viewBox="0 0 24 24"><use href="#tag"/><use href="#bMove"/></symbol>
<symbol id="lrot" viewBox="0 0 24 24"><use href="#tag"/><use href="#bRot"/></symbol>
<symbol id="ledit" viewBox="0 0 24 24"><use href="#tag"/><rect x="13.200" y="13" width="10.800" height="11" rx="2" fill="#c9a50c"/><path d="M21.500 14.500l-4.500 5.500-1.500 3 4-1.500 3-5z" fill="#fff"/></symbol>
<symbol id="search3" viewBox="0 0 24 24"><use href="#globe" x=".5" y="0" width="22" height="22"/><path d="M6 2.500c4 5 4 10 1 16M17 2.500c-4 5-3 10 0 15M1.500 8h20" stroke="#dfe9f5" fill="none" stroke-width=".8"/><path d="M5 19l4-7c2-1 3 1 3 2 0-1 2-3 4-2l4.500 7z" fill="#000"/><circle cx="7.500" cy="21" r="2.900" fill="#eee" stroke="#000" stroke-width="1.300"/><circle cx="18.500" cy="21" r="2.900" fill="#eee" stroke="#000" stroke-width="1.300"/></symbol>
<symbol id="helpb" viewBox="0 0 24 24"><rect x="2.500" y="1.500" width="19.500" height="21" fill="#6c96c8" stroke="#1d2e40"/><rect x="2.500" y="1.500" width="4.500" height="21" fill="#2b3c4e"/><text x="10.500" y="18" font-size="17" font-family="Liberation Serif" fill="#fff">?</text></symbol>
<!-- advanced digitizing -->
<symbol id="cad" viewBox="0 0 24 24"><rect x="16.500" y="2" width="6" height="20" fill="#fce94f" stroke="#a08a20"/><path d="M19 5h3M20 8h2M19 11h3M20 14h2" stroke="#80701a" stroke-width=".7"/><path d="M2 1v22h21z" fill="#fb9a60" stroke="#6b3410"/><path d="M6.500 13v6.500h6z" fill="#fdfdfd" stroke="#6b3410"/></symbol>
<symbol id="b1" viewBox="0 0 24 24"><use href="#blob"/><use href="#bRot"/></symbol>
<symbol id="b2" viewBox="0 0 24 24"><use href="#blob"/><use href="#bLR"/></symbol>
<symbol id="b3" viewBox="0 0 24 24"><ellipse cx="8" cy="9" rx="6.500" ry="7.500" fill="#b4b8b2" stroke="#666"/><path d="M12 9.500h8l3 6.500-3.500 7h-7L9 16z" fill="#ced6dd" stroke="#667"/><path d="M7 8l7 8M14 12v4h-3" stroke="#444" fill="none"/></symbol>
<symbol id="b4" viewBox="0 0 24 24"><use href="#blob"/><ellipse cx="7.500" cy="6.500" rx="4" ry="2.700" transform="rotate(-12 7.500 6.500)" fill="#fff" stroke="#666"/><use href="#bNew"/></symbol>
<symbol id="lobe" viewBox="0 0 24 24"><path d="M8.500 13c3-1 4 0 3 3.500S9 23 6.500 23 1.500 22 1.500 20.500 5 14.500 8.500 13z" fill="#b4b8b2" stroke="#666" stroke-width="1.100"/></symbol>
<symbol id="b5" viewBox="0 0 24 24"><use href="#blob"/><use href="#lobe"/><use href="#bNew"/></symbol>
<symbol id="b6" viewBox="0 0 24 24"><use href="#blob"/><ellipse cx="7.500" cy="6.500" rx="4.300" ry="2.900" transform="rotate(-12 7.500 6.500)" fill="#999" stroke="#666"/><use href="#bNew"/></symbol>
<symbol id="b7" viewBox="0 0 24 24"><use href="#blob"/><ellipse cx="7.500" cy="6.500" rx="4" ry="2.700" transform="rotate(-12 7.500 6.500)" fill="#fff" stroke="#666"/><use href="#bDel"/></symbol>
<symbol id="b8" viewBox="0 0 24 24"><use href="#blob"/><use href="#lobe"/><use href="#bDel"/></symbol>
<symbol id="b9" viewBox="0 0 24 24"><path d="M1.500 8C1.500 3 4 1 8.500 1.500c4 .5 5 1.800 9 1.300 4-.5 5 .7 5 4.700 0 5-2 6-5 4.500-3-1.500-5.500-2-7 .5s-.5 9-4 9.200C3 21.500 2.500 17 2 14s-.5-4-.5-6z" fill="#b6b8aa" stroke="#666"/><path d="M2 11.500c3 1.500 5 1.500 8-1l5-1" stroke="#555" stroke-dasharray="1.200 2" fill="none"/></symbol>
<symbol id="b10" viewBox="0 0 24 24"><path d="M15 1.300c5-1 8.500 3.500 7.500 8-1 3-5 4-6 8s-5 6-9 5.300C3 22 1 18 2 14c1-3 5-4 6-8 .8-3 3-4.200 7-4.700z" fill="#c6c6b2" stroke="#777"/><path d="M15.500 4c3-.5 5 2.500 4.200 4.700-1 3-5 4-6 8-1 3-3.500 4-5.700 3.300-3-.5-4-3-3.300-5 1-3 5-4 6-8 .5-2 2.300-2.700 4.800-3z" fill="#c0c8c0" stroke="#888" stroke-width=".9"/></symbol>
<symbol id="rsh" viewBox="0 0 24 24"><path d="M3.500 4l5 11L14 5.500h8" stroke="#999" stroke-width="1.500" fill="none"/><g fill="#ddd" stroke="#777"><rect x="1.500" y="1.500" width="3.300" height="3.300"/><rect x="7" y="13.500" width="3.300" height="3.300"/><rect x="13" y="3.500" width="3.300" height="3.300"/><rect x="19" y="3.500" width="3.300" height="3.300"/></g><rect x="13" y="13" width="11" height="11" rx="2" fill="#777"/><path d="M15 18.500c0-3.500 4-4 6-2M22 18.500c0 3.500-4 4-6 2M21.500 14.500v2.500H19M15.500 22.500V20H18" fill="none" stroke="#fff" stroke-width="1.300"/></symbol>
<symbol id="addpart" viewBox="0 0 24 24"><path d="M10.500 0v10" stroke="#555" stroke-width="2"/><path d="M1 11.500h22" stroke="#999" stroke-width="1.200"/><path d="M10.500 13v6M16 13v10" stroke="#a66" stroke-width="1"/><g fill="#eee" stroke="#777"><rect x="8.800" y="9.800" width="3.300" height="3.300"/><rect x="14.300" y="9.800" width="3.300" height="3.300"/></g><rect x="16" y="1.500" width="6.500" height="6.500" rx="1" fill="#a9a580"/><rect x="1.500" y="17" width="6.500" height="6.500" rx="1" fill="#c99"/><path d="M3 18.500l3.500 3.500M6.500 18.500L3 22" stroke="#fff"/></symbol>
<symbol id="splitf" viewBox="0 0 24 24"><path d="M1.500 7c0-4 3-5.500 6-5.500s4 3 4 6-4 5-6 4.500-4-2-4-5zM22.500 7c0-4-3-5-5-5s-4 3-4 6 4 5 6 4.500 3-2.500 3-5.500z" fill="#b4b8b2" stroke="#666"/><path d="M16 1.500L9.500 17M12 2l4.500 14" stroke="#aaa" stroke-width="2"/><ellipse cx="9" cy="19.500" rx="1.900" ry="3.200" transform="rotate(25 9 19.500)" fill="none" stroke="#a06070" stroke-width="1.400"/><ellipse cx="17.500" cy="18.500" rx="1.900" ry="3.200" transform="rotate(-35 17.500 18.500)" fill="none" stroke="#a06070" stroke-width="1.400"/></symbol>
<symbol id="merge" viewBox="0 0 24 24"><path d="M2 7c0-4 3-5 6-5s3 2 4 2 3-2 5-2 5 1 5 5-2 6-4 5-4-2-6-2-2 3-5 3-5-3-5-6z" fill="#b4b8b2" stroke="#666"/><path d="M9 3h6M9 6h6M9 9h6M8 11c0 6 4 7 6 10" stroke="#555" fill="none" stroke-width="1.100"/></symbol>
<symbol id="rail" viewBox="0 0 24 24"><path d="M3 2.500h18M3 9h18M3 12h18M3 17.500h18M3 22h18M3 5h6l1 4M21 5h-6l-1 4M3 14h6M21 14h-6M9 5c2-2 4-2 6 0M9 14c2-3 4-3 6 0M9 20c2-2 4-2 6 0" stroke="#777" fill="none" stroke-width="1"/></symbol>
<symbol id="rotsym" viewBox="0 0 24 24"><path d="M7 20c-5-4-5-12 3-16M7 3.500h4v4" stroke="#555" fill="none" stroke-width="1.200"/><path d="M12.500 2.500l8 5-8 5z" fill="#bbb" stroke="#777"/><path d="M12.500 13l4.500 9H8z" fill="#eee" stroke="#999"/></symbol>
<symbol id="arc" viewBox="0 0 24 24"><path d="M4 21C3 10 7 4 18 3.500" stroke="#999" stroke-width="2" fill="none"/><path d="M4 21L18 3.500" stroke="#aaa" fill="none" stroke-width=".8"/><g fill="#eee" stroke="#777"><rect x="2.500" y="19.500" width="3.300" height="3.300"/><rect x="17" y="2" width="3.300" height="3.300"/><rect x="8" y="8" width="3.300" height="3.300"/></g><use href="#bNew"/></symbol>
<symbol id="circ" viewBox="0 0 24 24"><path d="M3 7l6-5 6 1 4 6-2 7-6 3-6-2z" fill="none" stroke="#999" stroke-width="2.300"/><rect x="1" y=".5" width="3.300" height="3.300" fill="#eee" stroke="#777"/><use href="#bNew"/></symbol>
<symbol id="elli" viewBox="0 0 24 24"><ellipse cx="11" cy="10" rx="9" ry="5.500" transform="rotate(-35 11 10)" fill="none" stroke="#999" stroke-width="2.200"/><g fill="#eee" stroke="#777"><rect x="9" y="9" width="3.300" height="3.300"/><rect x="7.500" y="4.500" width="3.300" height="3.300"/><rect x="1.500" y="13" width="3.300" height="3.300"/></g><use href="#bNew"/></symbol>
<symbol id="rect" viewBox="0 0 24 24"><rect x="4" y="4" width="15" height="13" fill="none" stroke="#999" stroke-width="2"/><g fill="#eee" stroke="#777"><rect x="2" y="2" width="3.500" height="3.500"/><rect x="17" y="2" width="3.500" height="3.500"/><rect x="2" y="15" width="3.500" height="3.500"/></g><use href="#bNew"/></symbol>
<symbol id="poly" viewBox="0 0 24 24"><path d="M4 12L9 3l10 4v12l-10 2z" fill="none" stroke="#999" stroke-width="2.200"/><g fill="#eee" stroke="#777"><rect x="2" y="10" width="3.300" height="3.300"/><rect x="10" y="10" width="3.300" height="3.300"/></g><use href="#bNew"/></symbol>
<symbol id="python" viewBox="0 0 24 24"><path d="M11.500 1.500c-4.500 0-5 2-5 3.500V7H12v1H4.500C2 8 1 10 1 12.500S2.500 17 4.500 17h2v-3c0-2 1.500-3.500 3.500-3.500h5c1.500 0 2.500-1 2.500-2.500V5c0-2.500-2-3.500-6-3.500z" fill="#3874a6" transform="translate(.8 0)"/><path d="M13 22.500c4.500 0 5-2 5-3.500v-2h-5.500v-1H20c2.500 0 3-2 3-4.500S22 7 20 7h-1.500v3c0 2-1.500 3.500-3.500 3.500h-5c-1.500 0-2.500 1-2.500 2.500v3c0 2.500 2 3.500 5.500 3.500z" fill="#ffd343" transform="translate(-.8 -.5)"/><circle cx="10" cy="4.300" r="1" fill="#fff"/><circle cx="14.500" cy="19.300" r="1" fill="#fff"/></symbol>
<symbol id="pycon" viewBox="0 0 24 24"><use href="#python" width="23" height="23"/><path d="M17 18l5 2.500-5 2.500" stroke="#333" fill="none" stroke-width="1.200"/></symbol>
<symbol id="prof" viewBox="0 0 24 24"><path d="M3.500 22V3M2 22h19" stroke="#777" stroke-width="1.500"/><path d="M3.500 1l2 3.500h-4zM22.500 22l-3.500-2v4z" fill="#777"/><path d="M6 4.500h15V20" stroke="#ddd" fill="none"/><path d="M6 16c3-1 6-1 8-4s1-6 7-8.500" stroke="#a2169e" stroke-width="1.600" fill="none"/><path d="M6 18.500c4-1 6-1 8-4s4-1 7-.5" stroke="#2b92a8" stroke-width="1.600" fill="none"/></symbol>
<symbol id="topo" viewBox="0 0 24 24"><path d="M3.500 3c0 5-1 8 2 10s6 1 5.500-3 2-8 4-7.500h6" stroke="#999" stroke-width="1.500" fill="none"/><g fill="#fff" stroke="#888"><circle cx="3.500" cy="2" r="1.500"/><circle cx="16" cy="2.500" r="1.500"/><circle cx="21.500" cy="2.500" r="1.500"/><circle cx="8.500" cy="13.500" r="1.500"/></g><use href="#bNew"/></symbol>
<!-- snapping -->
<symbol id="magnet" viewBox="0 0 24 24"><path d="M9.500 5.500l3-3.500 3 4-3 3.800zM2 13.500l3-2.500 4 3.500-2.500 3z" fill="#fff" stroke="#900"/><path d="M15.500 6c6 3.500 7.500 10 3 14s-10.500 2.500-12-2.500L9 14.500c2 3 4.500 3.500 6.500 1.500s.5-4.500-2.500-6.500z" fill="#d40d0d" stroke="#8f0606" stroke-width=".9"/></symbol>
<symbol id="snapv" viewBox="0 0 24 24"><g transform="translate(1.200 0)"><path d="M3 3l5 16M8 17L15 5h6M3 9l5 4 5-8M14 11h6" stroke="#888" fill="none"/><g fill="#eee" stroke="#777"><rect x="2" y="1.500" width="3" height="3"/><rect x="6.500" y="18" width="3" height="3"/><rect x="12" y="3.500" width="3" height="3"/><rect x="18" y="3.500" width="3" height="3"/><rect x="12" y="10" width="3" height="3"/><rect x="18" y="10" width="3" height="3"/><rect x="2" y="8" width="3" height="3"/></g></g></symbol>
<symbol id="snapt" viewBox="0 0 24 24"><g fill="#ddd" stroke="#777" stroke-width="1.200"><rect x="5" y="5" width="3.300" height="3.300"/><rect x="16.500" y="7" width="3.300" height="3.300"/><rect x="11" y="17" width="3.300" height="3.300"/></g></symbol>
<symbol id="topoe" viewBox="0 0 24 24"><path d="M2 2.500l5 8M8 11l12.500-4M7.500 13v9.500" stroke="#84bd8c" stroke-width="2" stroke-linecap="round"/><rect x="5.300" y="9" width="4.200" height="4.200" fill="#bbb" stroke="#666"/></symbol>
<symbol id="overl" viewBox="0 0 24 24"><path d="M2 5.500C3.500 1.500 8 .8 11 1.700c3 1.300 5 1.300 8 1.300 3 0 3.300 1.500 3.300 4.500 0 3-1.500 4.500-4 4.500s-3-1-5-3z" fill="#bdbdbd" stroke="#4a4a4a"/><path d="M.8 9C.8 5 4 3.200 7.500 3.200c4 0 6 3 6 7 0 3 4 5 4 9 0 2.500-2 4.300-5 4.300s-5-1.800-5-4.800 1-4 0-6S.8 12.500.8 9z" fill="#8cc98c" stroke="#4a4a4a" stroke-width="1.100"/><path d="M6.500 12l6.500-2" stroke="#333" stroke-dasharray="1.500 1.200"/></symbol>
<symbol id="inter" viewBox="0 0 24 24"><path d="M1.500 2.500l20 20M21.500 2.500l-20 20" stroke="#999" stroke-width="1.800" stroke-linecap="round"/><circle cx="11.500" cy="12.500" r="2.300" fill="#ccc" stroke="#888"/></symbol>
<symbol id="self" viewBox="0 0 24 24"><path d="M21.500 2.500l-20 20" stroke="#999" stroke-width="1.800" stroke-linecap="round"/><path d="M3.800 4l5.700 5.500 8.500.5 2.200 11.500-6.700-6.500-8 .5z" fill="#b2a870"/></symbol>
<symbol id="trace" viewBox="0 0 24 24"><g transform="translate(-1.500 0)"><path d="M3 22l6-3L6 6.500l16 8" stroke="#aaa" stroke-width="1.800" fill="none" stroke-linecap="round"/><circle cx="5.500" cy="6.500" r="2.300" fill="#ccc" stroke="#888"/><circle cx="9.500" cy="18.500" r="2.300" fill="#ccc" stroke="#888"/><path d="M13 2l3.500-1.500 5 10.500.3 4-3.300-2.500z" fill="#c9c48c" stroke="#888" stroke-width=".8"/></g></symbol>
<!-- docks -->
<symbol id="brush" viewBox="0 0 24 24"><path d="M4 7l9-1-3 4-7 3z" fill="#fce14a"/><path d="M2 12l8-3-3 6-6 2z" fill="#7fa7db"/><path d="M1 17l6-3 6 6-9 1z" fill="#e2574c"/><path d="M6 13c4-3 7-4 10-1l2 3-7 8c-1-4-3-6-5-10z" fill="#e8a557" stroke="#b5762c" stroke-width=".8"/><path d="M16 12l7-8" stroke="#c98836" stroke-width="2.600" stroke-linecap="round"/></symbol>
<symbol id="addgrp" viewBox="0 0 24 24"><path d="M2 12.500v9h14M5 8.500v10h14" fill="none" stroke="#777" stroke-width="1.200"/><rect x="8" y="5" width="13" height="11" fill="none" stroke="#777" stroke-width="1.200"/><path d="M12.500 12V3.500c0-2 3-2 3 0v8" stroke="#34608f" fill="none" stroke-width="1.400"/><use href="#bAdd"/></symbol>
<symbol id="eye" viewBox="0 0 24 24"><path d="M1 13c5-7 16-8 22 1-6 6-17 6-22-1z" fill="#fff" stroke="#777" stroke-width="1.200"/><path d="M1 8C8 3 16 3 22 7" stroke="#999" fill="none" stroke-width="1"/><circle cx="12" cy="12" r="4.600" fill="#8db3e2" stroke="#34608f" stroke-width=".8"/><circle cx="12" cy="12" r="2" fill="#222"/></symbol>
<symbol id="funnel" viewBox="0 0 24 24"><path d="M2 5h20l-7.500 9v9h-5v-9z" fill="#6c96c8" stroke="#34608f"/><rect x="2" y="2" width="20" height="3.500" fill="#fcee4b" stroke="#b7a800" stroke-width=".9"/></symbol>
<symbol id="epsf" viewBox="0 0 24 24"><text x="1" y="14.500" font-size="27" font-weight="700" font-family="Liberation Serif" fill="#555">ε</text><path d="M13 13h12l-4 5v6h-4v-6z" fill="#aaa" stroke="#888"/></symbol>
<symbol id="expall" viewBox="0 0 24 24"><path d="M1 3h18M3 3v18M3 10h6M3 19h6" stroke="#888" fill="none" stroke-width="1.200"/><g fill="#fbdfa6" stroke="#ef8d12" stroke-width="1.500"><rect x="7.500" y="7.500" width="4" height="4"/><rect x="7.500" y="17" width="4" height="4"/></g><path d="M14 2h5v12h4l-6.500 8L10 14h4z" fill="#6c96c8" stroke="#34608f"/></symbol>
<symbol id="colall" viewBox="0 0 24 24"><path d="M1 3h18M3 3v18M3 10h6M3 19h6" stroke="#888" fill="none" stroke-width="1.200"/><g fill="#fbdfa6" stroke="#ef8d12" stroke-width="1.500"><rect x="7.500" y="7.500" width="4" height="4"/><rect x="7.500" y="17" width="4" height="4"/></g><path d="M14 21h5V10h4l-6.500-8.500L10 10h4z" fill="#6c96c8" stroke="#34608f"/></symbol>
<symbol id="remlay" viewBox="0 0 24 24"><rect x="1.500" y="1.500" width="18" height="16" fill="#f3f3f3" stroke="#888" stroke-width="1.400"/><rect x="14" y="15" width="9.500" height="7" rx="1.500" fill="#e0474c"/><path d="M16 18.500h5.500" stroke="#fff" stroke-width="1.700"/></symbol>
<symbol id="float" viewBox="0 0 22 22"><rect x="1" y="1" width="20" height="20" rx="3" fill="#f0f0f0" stroke="#6a6a6a" stroke-width="1.600"/><path d="M9 5.500h7.500V13H9zM5.500 9.500v7h7.500v-3.500" fill="none" stroke="#6a6a6a" stroke-width="1.500"/></symbol>
<symbol id="close" viewBox="0 0 22 22"><rect x="1" y="1" width="20" height="20" rx="3" fill="#f0f0f0" stroke="#6a6a6a" stroke-width="1.600"/><path d="M6 6l10 10M16 6L6 16" stroke="#555" stroke-width="3.600"/></symbol>
<symbol id="check" viewBox="0 0 20 22"><path d="M3 11.500l4.500 6.500L16.500 3" fill="none" stroke="#000" stroke-width="3.300"/></symbol>
<symbol id="raster" viewBox="0 0 24 24"><path d="M3 2h18v15h-6v5H3z" fill="#aac5e6"/><path d="M3 2h6v5H3zM15 2h6v5h-6zM9 7h6v6H9zM3 13h6v9H3z" fill="#2b3f55"/></symbol>
<symbol id="meshl" viewBox="0 0 24 24"><path d="M2 2h20v12h-6v8H2z" fill="url(#gLb)"/><path d="M2 2h20v12h-7v8H2zM8 2v20M2 14.500h14M22 2L9 14" stroke="#2b3f55" fill="none" stroke-width="1.500"/></symbol>
<symbol id="plg" viewBox="0 0 24 24"><path d="M1 9c0-6 2-7 6-5s6 3 9 1 7-1 7 4 0 9-4 8-7-3-10-1-8 4-8-7z" fill="url(#gGrey)" stroke="#888" stroke-width="1.200" transform="translate(0 1)"/></symbol>
<symbol id="pt3" viewBox="0 0 24 24"><g fill="#eee" stroke="#888" stroke-width="1.200"><circle cx="8" cy="9" r="1.600"/><circle cx="18" cy="4" r="1.600"/><circle cx="5.500" cy="18" r="1.600"/></g></symbol>
<symbol id="qm" viewBox="0 0 24 24"><circle cx="12" cy="12" r="8.500" fill="none" stroke="#bbb"/><path d="M2 10h20M4 15h16M12 3v18" stroke="#bbb" fill="none"/><text x="4.700" y="21" font-size="25" font-weight="700" font-family="Liberation Sans" fill="#555">?</text></symbol>
<symbol id="mag" viewBox="0 0 24 24"><circle cx="9.500" cy="9.500" r="8" fill="none" stroke="#8a8a8a" stroke-width="1.500"/><path d="M15.500 15.500l8 8" stroke="#8a8a8a" stroke-width="2.500"/></symbol>
<!-- profile tools -->
<symbol id="addlay" viewBox="0 0 24 24"><rect x="2" y="2" width="16" height="17" fill="#f3f3f3" stroke="#777" stroke-width="1.300"/><use href="#bAdd"/></symbol>
<symbol id="ptree" viewBox="0 0 24 24"><path d="M2 2.500h20M4 2.500V20M4 9h4M4 19h4" stroke="#777" fill="none" stroke-width="1.300"/><g fill="#fcd07c" stroke="#ef8d12" stroke-width="1.500"><rect x="6.500" y="6.500" width="5" height="5"/><rect x="6.500" y="16" width="5" height="5"/></g><path d="M14 9h8M14 18.500h8" stroke="#777" stroke-width="2"/></symbol>
<symbol id="capv" viewBox="0 0 24 24"><path d="M3 3l5 12 5-10h8" stroke="#79b087" stroke-width="1.600" fill="none"/><g fill="#eee" stroke="#777"><rect x="1.500" y="1.500" width="3.500" height="3.500"/><rect x="6.500" y="13" width="3.500" height="3.500"/><rect x="12" y="3.500" width="3.500" height="3.500"/><rect x="19" y="3.500" width="3.500" height="3.500"/></g></symbol>
<symbol id="capnew" viewBox="0 0 24 24"><use href="#capv"/><use href="#bNew"/></symbol>
<symbol id="capsel" viewBox="0 0 24 24"><use href="#capv"/><path d="M11.500 10l1.500 12 2.600-2.200 2.400 4.500 2.500-1.300-2.200-4.500h3.500z" fill="#fff" stroke="#111" stroke-width="1.200"/></symbol>
<symbol id="pl" viewBox="0 0 24 24"><path d="M18.500 2v20L5.500 12z" fill="#6c96c8" stroke="#34608f" stroke-width="1.300"/></symbol>
<symbol id="pr" viewBox="0 0 24 24"><path d="M5.500 2v20l13-10z" fill="#6c96c8" stroke="#34608f" stroke-width="1.300"/></symbol>
<symbol id="broom" viewBox="0 0 24 24"><path d="M5 2l6 9" stroke="#c99430" stroke-width="2.600" stroke-linecap="round"/><path d="M8 11l5-3c3 2 7 7 8 12-3 1-8 2-11 1 0-3 0-6-2-10z" fill="#f7d232" stroke="#b58e10"/><path d="M8 11l5-3" stroke="#c0392b" stroke-width="2"/></symbol>
<symbol id="zx" viewBox="0 0 24 24"><rect x="10" y="1" width="12" height="21" fill="none" stroke="#999" stroke-dasharray="2 1.500"/><use href="#glass"/><path d="M11.500 5v8M18.500 5v8M11.500 9h7" stroke="#4479ba" stroke-width="2.300"/></symbol>
<symbol id="pdf" viewBox="0 0 24 24"><path d="M3 1h11l5 5v16H3z" fill="#fff" stroke="#888"/><path d="M5 18c4-3 6-10 5-14-2 1 1 9 7 10-4-1-8 1-12 4z" fill="none" stroke="#d62b1f" stroke-width="1.300"/><use href="#bExp"/></symbol>
<symbol id="img" viewBox="0 0 24 24"><path d="M3 1h11l5 5v16H3z" fill="#fff" stroke="#888"/><rect x="4" y="8" width="14" height="9" fill="#7fb0e8" stroke="#4479ba"/><path d="M4.500 16.500c3-4 8-4 13 0z" fill="#d8b53a"/><use href="#bExp"/></symbol>
<symbol id="psave" viewBox="0 0 24 24"><use href="#save"/><rect x="14" y="14" width="9" height="9" rx="1.500" fill="#5f9a5f"/><path d="M16 21l4-4" stroke="#fff" stroke-width="1.800"/></symbol>
<symbol id="dockw" viewBox="0 0 24 24"><rect x="5" y="2" width="16" height="17" fill="#fff" stroke="#777"/><rect x="5" y="2" width="16" height="3.500" fill="#6a6a6a"/><rect x="2" y="10" width="14" height="11" fill="#dce9f8" stroke="#777"/><path d="M4 13h4M10 13h4M4 16h4M10 16h4M4 18.800h4M10 18.800h4" stroke="#4479ba" stroke-width="1.300"/></symbol>
<!-- processing -->
<symbol id="gears" viewBox="0 0 24 24"><g stroke-dasharray="1.700 1.500" fill="none" stroke-width="3"><circle cx="8" cy="8" r="5.600" stroke="#c0181c"/><circle cx="19" cy="13" r="3.600" stroke="#777"/><circle cx="12" cy="20" r="3.400" stroke="#6c96c8"/></g><circle cx="8" cy="8" r="4" fill="none" stroke="#c0181c" stroke-width="3"/><circle cx="19" cy="13" r="2.500" fill="none" stroke="#777" stroke-width="2"/><circle cx="12" cy="20" r="2.300" fill="none" stroke="#6c96c8" stroke-width="2"/></symbol>
<symbol id="hist" viewBox="0 0 24 24"><circle cx="12" cy="12" r="10.800" fill="#f2f2f2" stroke="#888" stroke-width="1.300"/><path d="M12 5v7.500l5.500 2.500" stroke="#777" stroke-width="1.300" fill="none"/></symbol>
<symbol id="doc" viewBox="0 0 24 24"><path d="M4 1.500h11l5 5V23H4z" fill="#fbfbfb" stroke="#888" stroke-width="1.200"/><path d="M14.500 1.500V7H20" fill="none" stroke="#888"/><path d="M6.500 8h6M6.500 12h11M6.500 15.500h8M6.500 19h11" stroke="#555" stroke-width="1.200"/></symbol>
<symbol id="note" viewBox="0 0 24 24"><rect x="1" y="2" width="15" height="13" fill="#fce94f" stroke="#c4a000"/><path d="M21 5l3 2-8 13-5 3 1-5z" fill="#d8cf90" stroke="#8b845c"/></symbol>
<symbol id="mouse" viewBox="0 0 24 24"><g transform="rotate(-18 12 12)"><path d="M5 5c0-5 10-5 10 0l1 8H6z" fill="#333" stroke="#111"/><path d="M10 2v6" stroke="#fff" stroke-width="2"/><ellipse cx="14" cy="18" rx="5" ry="6" fill="#f5f5f5" stroke="#111" stroke-width="1.600"/><circle cx="14" cy="18" r="1.800" fill="none" stroke="#111"/></g><path d="M19 5l3-2M1 17h2" stroke="#222" stroke-dasharray="1.500 1"/></symbol>
<symbol id="lock" viewBox="0 0 24 24"><path d="M7 11V6.500a5 5 0 0 1 10 0V11" fill="none" stroke="#888" stroke-width="2.200"/><rect x="3" y="10.500" width="18" height="12.500" rx="1.500" fill="#5c5c5c"/></symbol>
<symbol id="wglobe" viewBox="0 0 24 24"><circle cx="12" cy="12.500" r="9.500" fill="none" stroke="#666" stroke-width="1.400"/><path d="M3 6h18l2.500 5H.5z" fill="#8a8a8a"/><path d="M4 17h16M12 3v19M12 3c-6 6-6 13 0 19M12 3c6 6 6 13 0 19" fill="none" stroke="#666" stroke-width="1.100"/></symbol>
<symbol id="chat" viewBox="0 0 24 24"><path d="M12 1.500c6.500 0 11.500 4 11.500 9 0 3-1.500 5.300-4 7l3 5.500c-4 0-6-1.500-7.500-3.500C7 20.500.5 17 .5 10.500c0-5 5-9 11.500-9z" fill="#5c5c5c"/><g fill="#fff"><circle cx="6.500" cy="10.500" r="1.500"/><circle cx="12" cy="10.500" r="1.500"/><circle cx="17.500" cy="10.500" r="1.500"/></g></symbol>
</svg>

<header class="titlebar d-flex align-items-center flex-shrink-0">
  <svg width="31" height="31"><use href="#qgis"/></svg><span style="margin-left:6px">QGIS_M01A19 — QGIS</span>
  <div class="winctl d-flex align-items-center ms-auto pb-1">
    <svg width="22" height="22" stroke="#8c8c8c" fill="none" stroke-width="1.500"><path d="M1 11h20"/></svg>
    <svg width="22" height="22" stroke="#8c8c8c" fill="none" stroke-width="1.500"><rect x="1" y="5" width="15" height="15" rx="3"/><path d="M5 1.500h11a4 4 0 0 1 4 4V16"/></svg>
    <svg width="22" height="22" stroke="#8c8c8c" fill="none" stroke-width="1.500"><path d="M1 1l20 20M21 1L1 21"/></svg>
  </div>
</header>
<nav class="menubar d-flex align-items-center flex-shrink-0">
  <span>Pro<u>j</u>ect</span><span><u>E</u>dit</span><span><u>V</u>iew</span><span><u>L</u>ayer</span><span><u>S</u>ettings</span><span><u>P</u>lugins</span><span>Vect<u>o</u>r</span><span><u>R</u>aster</span><span><u>D</u>atabase</span><span><u>W</u>eb</span><span><u>M</u>esh</span><span>Pro<u>c</u>essing</span><span><u>H</u>elp</span>
</nav>

<div class="tools d-flex align-items-center flex-shrink-0">
  <i class="grip first"></i>
  <a class="tb"><svg><use href="#new"/></svg></a><a class="tb"><svg><use href="#open"/></svg></a><a class="tb"><svg><use href="#save"/></svg></a><a class="tb"><svg><use href="#layout"/></svg></a><a class="tb"><svg><use href="#layoutmgr"/></svg></a><a class="tb"><svg><use href="#style"/></svg></a>
  <i class="grip"></i>
  <a class="tb"><svg><use href="#hand"/></svg></a><a class="tb"><svg><use href="#pan"/></svg></a><a class="tb"><svg><use href="#zin"/></svg></a><a class="tb"><svg><use href="#zout"/></svg></a><a class="tb"><svg><use href="#zfull"/></svg></a><a class="tb"><svg><use href="#zsel"/></svg></a><a class="tb"><svg><use href="#zlay"/></svg></a><a class="tb off"><svg><use href="#z11"/></svg></a><a class="tb"><svg><use href="#zprev"/></svg></a><a class="tb off"><svg><use href="#znext"/></svg></a><a class="tb"><svg><use href="#newmap"/></svg></a><a class="tb"><svg><use href="#new3d"/></svg></a><a class="tb"><svg><use href="#bmnew"/></svg></a><a class="tb"><svg><use href="#bms"/></svg></a><a class="tb"><svg><use href="#clock"/></svg></a><a class="tb"><svg><use href="#refresh"/></svg></a>
  <i class="grip"></i>
  <a class="tb dd"><svg><use href="#sel"/></svg></a><a class="tb dd"><svg><use href="#selexp"/></svg></a><a class="tb dd"><svg><use href="#desel"/></svg></a><a class="tb dd"><svg><use href="#selloc"/></svg></a>
  <i class="grip"></i>
  <a class="tb"><svg><use href="#ident"/></svg></a><a class="tb"><svg><use href="#abacus"/></svg></a><a class="tb on"><svg><use href="#gear"/></svg></a><a class="tb"><svg><use href="#sigma"/></svg></a><a class="tb dd"><svg><use href="#table"/></svg></a><a class="tb dd"><svg><use href="#ruler"/></svg></a><a class="tb on"><svg><use href="#tip"/></svg></a><a class="tb dd off"><svg><use href="#gearrun"/></svg></a>
</div>

<div class="tools d-flex align-items-center flex-shrink-0">
  <i class="grip first"></i>
  <a class="tb"><svg><use href="#dsrc"/></svg></a><a class="tb"><svg><use href="#gpkg"/></svg></a><a class="tb"><svg><use href="#newshp"/></svg></a><a class="tb"><svg><use href="#feather"/></svg></a><a class="tb"><svg><use href="#chip"/></svg></a><a class="tb"><svg><use href="#meshnew"/></svg></a><a class="tb"><svg><use href="#virt"/></svg></a>
  <i class="grip"></i>
  <a class="tb off corner"><svg><use href="#pencils"/></svg></a><a class="tb off"><svg><use href="#pencil1"/></svg></a><a class="tb off"><svg><use href="#savee"/></svg></a>
  <a class="tb on me-0"><svg><use href="#addline"/></svg></a><a class="tb on mx-0" style="width:24px"><i class="dn"></i></a>
  <a class="tb off"><svg><use href="#addpt"/></svg></a><a class="tb dd off"><svg><use href="#vertex"/></svg></a><a class="tb off"><svg><use href="#multi"/></svg></a><a class="tb off"><svg><use href="#trash"/></svg></a><a class="tb off"><svg><use href="#scis"/></svg></a><a class="tb off"><svg><use href="#copy"/></svg></a><a class="tb off"><svg><use href="#paste"/></svg></a><a class="tb off"><svg><use href="#undo"/></svg></a><a class="tb off"><svg><use href="#redo"/></svg></a>
  <i class="grip"></i>
  <a class="tb"><svg><use href="#abc"/></svg></a><a class="tb"><svg><use href="#pie"/></svg></a>
  <i class="vsep"></i>
  <a class="tb"><svg><use href="#lpinb"/></svg></a><a class="tb"><svg><use href="#abcr"/></svg></a>
  <i class="vsep"></i>
  <a class="tb"><svg><use href="#lpin"/></svg></a><a class="tb"><svg><use href="#leye"/></svg></a><a class="tb"><svg><use href="#lmove"/></svg></a><a class="tb"><svg><use href="#lrot"/></svg></a><a class="tb"><svg><use href="#ledit"/></svg></a>
  <i class="grip"></i>
  <a class="tb"><svg><use href="#search3"/></svg></a>
  <i class="grip ms-auto"></i><a class="tb" style="width:62px;margin-right:4px"><svg><use href="#helpb"/></svg></a><i class="grip" style="margin-right:5px"></i>
</div>

<div class="tools d-flex align-items-center flex-shrink-0">
  <i class="grip first"></i>
  <a class="tb"><svg><use href="#cad"/></svg></a><a class="tb dd off"><svg><use href="#mvpt"/></svg></a><a class="tb off"><svg><use href="#b1"/></svg></a><a class="tb off"><svg><use href="#b2"/></svg></a><a class="tb off"><svg><use href="#b3"/></svg></a><a class="tb off"><svg><use href="#b4"/></svg></a><a class="tb off"><svg><use href="#b5"/></svg></a><a class="tb off"><svg><use href="#b6"/></svg></a><a class="tb off"><svg><use href="#b7"/></svg></a><a class="tb off"><svg><use href="#b8"/></svg></a><a class="tb off"><svg><use href="#b9"/></svg></a><a class="tb off"><svg><use href="#b10"/></svg></a><a class="tb off"><svg><use href="#rsh"/></svg></a><a class="tb off"><svg><use href="#addpart"/></svg></a><a class="tb off"><svg><use href="#splitf"/></svg></a><a class="tb off"><svg><use href="#splitf"/></svg></a><a class="tb off"><svg><use href="#merge"/></svg></a><a class="tb off"><svg><use href="#rail"/></svg></a><a class="tb dd off"><svg><use href="#rotsym"/></svg></a>
  <i class="grip"></i>
  <a class="tb off"><svg><use href="#arc"/></svg></a><a class="tb dd off"><svg><use href="#circ"/></svg></a><a class="tb dd off"><svg><use href="#elli"/></svg></a><a class="tb dd off"><svg><use href="#rect"/></svg></a><a class="tb dd off"><svg><use href="#poly"/></svg></a>
  <i class="grip"></i>
  <a class="tb"><svg><use href="#pycon"/></svg></a><a class="tb dd"><svg><use href="#prof"/></svg></a><a class="tb off"><svg><use href="#topo"/></svg></a>
</div>

<div class="tools last d-flex align-items-center flex-shrink-0">
  <i class="grip first"></i>
  <a class="tb"><svg><use href="#magnet"/></svg></a><a class="tb off corner"><svg><use href="#snapv"/></svg></a><a class="tb on off corner"><svg><use href="#snapt"/></svg></a>
  <div class="field mute text-secondary" style="width:168px;height:40px;margin-left:1px;background:#f1f1f1"><span class="flex-grow-1 ps-2 pt-1">5</span><span class="spin bg-white"><i class="up"></i><i class="dn"></i></span></div>
  <div class="field mute text-secondary" style="width:178px;height:44px;margin:0 0 0 3px;background:#f7f7f7;border-color:#c3c3c3"><span class="flex-grow-1 ps-2 pt-1">px</span><i class="dn me-3" style="margin-top:-3px"></i></div>
  <a class="tb"><svg><use href="#topoe"/></svg></a><a class="tb corner"><svg><use href="#overl"/></svg></a><a class="tb off"><svg><use href="#inter"/></svg></a><a class="tb dd off"><svg><use href="#self"/></svg></a><a class="tb off"><svg><use href="#trace"/></svg></a>
</div>

<main class="d-flex flex-shrink-0" style="height:1056px">
  <!-- Layers -->
  <section class="d-flex flex-column flex-shrink-0" style="width:485px">
    <div class="dockhead d-flex align-items-center"><span class="me-auto">Layers</span><svg width="22" height="22" class="me-1"><use href="#float"/></svg><svg width="22" height="22" style="margin:0 3px 0 2px"><use href="#close"/></svg></div>
    <div class="d-flex align-items-center" style="height:57px;padding:0 0 6px 7px">
      <a class="mini"><svg><use href="#brush"/></svg></a><a class="mini"><svg><use href="#addgrp"/></svg></a><a class="mini corner"><svg><use href="#eye"/></svg></a><a class="mini corner"><svg><use href="#funnel"/></svg></a><a class="mini off"><svg><use href="#epsf"/></svg></a><span class="mute" style="width:24px;padding-left:4px"><i class="dn"></i></span><a class="mini"><svg><use href="#expall"/></svg></a><a class="mini"><svg><use href="#colall"/></svg></a><a class="mini"><svg><use href="#remlay"/></svg></a>
    </div>
    <div class="pane d-flex flex-column" style="height:953px">
      <div class="trow bt" style="margin-top:1px"><span class="exp"><i class="dn"></i></span><span class="ck"><svg><use href="#check"/></svg></span><span class="ico"><svg><use href="#raster"/></svg></span>DisenoEstructuraEscalonadaFlujoRasante</div>
      <div style="height:29px;padding:1px 0 0 87px">Band 1 (Gray)</div>
      <div class="d-flex" style="height:195px;padding-left:87px"><div class="turbo"></div><div class="d-flex flex-column justify-content-between" style="height:194px;padding-left:10px"><span>73.729925</span><span>70.100026</span></div></div>
      <div class="trow bt"><span class="exp"><i class="dn"></i></span><span class="ck"><svg><use href="#check"/></svg></span><span class="ico"><svg><use href="#meshl"/></svg></span>DisenoEstructuraEscalonadaFlujoRasante<span class="crs"><svg><use href="#qm"/></svg></span></div>
      <div class="trow" style="height:28px;padding-left:57px"><i class="rt"></i><span style="margin-left:22px">Bed Elevation</span></div>
      <div class="trow bt"><span class="exp"></span><span class="ck"><svg><use href="#check"/></svg></span><span class="ico"><svg><use href="#plg"/></svg></span>entities<span class="crs"><svg><use href="#qm"/></svg></span></div>
      <div class="trow bt"><span class="exp"></span><span class="ck"><svg><use href="#check"/></svg></span><span class="ico"><svg><use href="#pt3"/></svg></span>DisenoEstructuraEscalonadaFlujoRasante<span class="crs"><svg><use href="#qm"/></svg></span></div>
      <div class="trow bt gi"><span class="exp"></span><span class="ck"></span><span class="ico"><i class="dot" style="background:#e15989"></i></span>DisenoEstructuraEscalonadaFlujoRasante</div>
      <div class="trow bt gi"><span class="exp"></span><span class="ck"></span><span class="ico"><i class="dot" style="background:#987db7"></i></span>DisenoEstructuraEscalonadaFlujoRasante</div>
      <div class="trow bt gi"><span class="exp"><i class="dn"></i></span><span class="ck"></span><span class="ico"><svg><use href="#pt3"/></svg></span><u>R.HCMC.DisenoEstructuraEscalonada</u></div>
      <div class="trow sub" style="background:#efefef"><span class="ck"><svg><use href="#check"/></svg></span><i class="dot" style="background:#440154"></i>70.1 - 70.6</div>
      <div class="trow sub"><span class="ck"><svg><use href="#check"/></svg></span><i class="dot" style="background:#3b528b"></i>70.6 - 71.2</div>
      <div class="trow sub"><span class="ck"><svg><use href="#check"/></svg></span><i class="dot" style="background:#21908d"></i>71.2 - 71.7</div>
      <div class="trow sub"><span class="ck"><svg><use href="#check"/></svg></span><i class="dot" style="background:#5dc963"></i>71.7 - 73.24</div>
      <div class="trow sub"><span class="ck"><svg><use href="#check"/></svg></span><i class="dot" style="background:#fde725"></i>73.24 - 73.73</div>
      <div class="hbar d-flex mt-auto"><span class="knob" style="width:27px"><i class="lf"></i></span><span class="knob" style="width:274px;border:solid #bbb;border-width:0 1.500px"></span><span class="flex-grow-1"></span><span class="knob" style="width:28px;border-left:1.500px solid #bbb"><i class="rt"></i></span></div>
    </div>
  </section>
  <div class="split v" style="width:13px;padding-left:4px"></div>

  <!-- Map canvas and elevation profile -->
  <section class="d-flex flex-column flex-shrink-0" style="width:1695px;padding-top:3px">
    <div style="height:533px;border:1.500px solid #b9b9b9;background:#fff;overflow:hidden">
      <svg width="1692" height="530" viewBox="499 396 1692 530" preserveAspectRatio="none">
        <defs>
          <linearGradient id="mTop" gradientUnits="userSpaceOnUse" x1="564" y1="0" x2="2192" y2="0"><stop offset="0" stop-color="#fd8d27"/><stop offset=".521" stop-color="#fd8d27"/><stop offset=".532" stop-color="#f36315"/><stop offset=".5425" stop-color="#d43305"/><stop offset=".550" stop-color="#a01101"/><stop offset=".557" stop-color="#7d0500"/><stop offset="1" stop-color="#780200"/></linearGradient>
          <linearGradient id="mDark" x1="0" x2="1"><stop offset="0" stop-color="#2f1137"/><stop offset="1" stop-color="#351e58"/></linearGradient>
          <linearGradient id="mGreen" x1="0" x2="1"><stop offset="0" stop-color="#64ff6d"/><stop offset="1" stop-color="#72ff60"/></linearGradient>
        </defs>
        <g fill="#8a5a35" stroke="#333" stroke-width="1.500"><circle cx="565" cy="532" r="8"/><circle cx="565" cy="855" r="8"/></g>
        <rect x="564" y="396" width="1630" height="532" fill="url(#mTop)"/>
        <rect x="564" y="532" width="819" height="324" fill="url(#mDark)"/>
        <g><rect x="1383" y="532" width="9" height="324" fill="#423c94"/><rect x="1392" y="532" width="9" height="324" fill="#4559cb"/><rect x="1401" y="532" width="10" height="324" fill="#4777ef"/><rect x="1411" y="532" width="9" height="324" fill="#4488fb"/><rect x="1420" y="532" width="10" height="324" fill="#3aa4f5"/><rect x="1430" y="532" width="8" height="324" fill="#26bfe0"/><rect x="1438" y="532" width="11" height="324" fill="#1cd3c6"/><rect x="1449" y="532" width="9" height="324" fill="#25e8b2"/><rect x="1458" y="532" width="9" height="324" fill="#3af38f"/></g>
        <rect x="1467" y="532" width="727" height="324" fill="url(#mGreen)"/>
        <path d="M1409.500 518.500h44l2 352h-43.500z" fill="#000" fill-opacity=".13" stroke="#fff" stroke-opacity=".6" stroke-width="2"/>
        <path d="M1432 519l2 352" stroke="#334a5e" stroke-opacity=".75" stroke-width="6.500"/>
        <path d="M1433 679l15 25h-30z" fill="#245a70" fill-opacity=".75" stroke="#fff" stroke-width="2"/>
        <rect x="1424.500" y="863" width="18" height="17.500" rx="4" fill="#000" stroke="#e8a99a" stroke-width="1"/>
        <path d="M1432 519l2 352" stroke="#fff" stroke-width="4" stroke-dasharray="14.500 7.100" stroke-dashoffset="7"/>
      </svg>
    </div>
    <div class="split h"></div>
    <div class="d-flex align-items-center" style="height:42px;padding-left:8px"><span class="me-auto">Elevation Profile</span><svg width="22" height="22" style="margin-right:6px"><use href="#float"/></svg><svg width="22" height="22" style="margin-right:3px"><use href="#close"/></svg></div>
    <div class="d-flex align-items-start flex-grow-1" style="padding:4px 0 0 7px">
      <a class="mini"><svg><use href="#addlay"/></svg></a><a class="mini on"><svg><use href="#ptree"/></svg></a><i class="vsep" style="margin:4px 8px 0 8px"></i><a class="mini on" style="margin-right:2px"><svg><use href="#capnew"/></svg></a><a class="mini"><svg><use href="#capsel"/></svg></a><a class="mini"><svg><use href="#pl"/></svg></a><a class="mini"><svg><use href="#pr"/></svg></a><a class="mini"><svg><use href="#broom"/></svg></a><i class="vsep" style="margin:4px 6px 0 7px"></i><a class="mini on"><svg><use href="#ident"/></svg></a><a class="mini" style="margin-left:1px"><svg><use href="#hand"/></svg></a><a class="mini"><svg><use href="#zx"/></svg></a><a class="mini"><svg><use href="#zin"/></svg></a><a class="mini"><svg><use href="#zfull"/></svg></a><a class="mini on" style="margin:0 1px"><svg><use href="#magnet"/></svg></a><a class="mini"><svg><use href="#ruler"/></svg></a><i class="vsep" style="margin:4px 5px 0 7px"></i><a class="mini"><svg><use href="#pdf"/></svg></a><a class="mini"><svg><use href="#img"/></svg></a><a class="mini corner"><svg><use href="#psave"/></svg></a><i class="vsep" style="margin:4px 6px 0 7px"></i><a class="mini"><svg><use href="#wrench"/></svg></a><a class="mini on"><svg><use href="#dockw"/></svg></a>
    </div>
    <div class="d-flex flex-shrink-0" style="height:407px">
      <div class="pane list2" style="width:911px;padding-top:2px">
        <div class="trow"><span class="exp"></span><span class="ck"></span><span class="ico"><svg><use href="#pt3"/></svg></span>DisenoEstructuraEscalonadaFlujoRasanteGIS — entities</div>
        <div class="trow"><span class="exp"></span><span class="ck"></span><span class="ico"><svg><use href="#plg"/></svg></span>entities</div>
        <div class="trow"><span class="exp"><i class="rt"></i></span><span class="ck"></span><span class="ico"><svg><use href="#pt3"/></svg></span>R.HCMC.DisenoEstructuraEscalonadaFlujoRasanteGIS</div>
        <div class="trow"><span class="exp"></span><span class="ck"></span><span class="ico"><i class="dot" style="background:#987db7"></i></span>DisenoEstructuraEscalonadaFlujoRasanteGIS</div>
        <div class="trow"><span class="exp"></span><span class="ck"></span><span class="ico"><i class="dot" style="background:#e15989"></i></span>DisenoEstructuraEscalonadaFlujoRasanteGISClean</div>
        <div class="trow"><span class="exp"></span><span class="ck"><svg><use href="#check"/></svg></span><span class="ico"><i style="width:32px;height:4px;background:#b5cf60"></i></span>DisenoEstructuraEscalonadaFlujoRasanteGISCivil3D</div>
        <div class="trow"><span class="exp"></span><span class="ck"><svg><use href="#check"/></svg></span><span class="ico"><i style="width:32px;height:4px;background:#987db7"></i></span>DisenoEstructuraEscalonadaFlujoRasanteGISCivil3D</div>
      </div>
      <div class="split v" style="width:9px"></div>
      <div class="pane" style="width:775px;background:#efefef">
        <svg width="772" height="404" viewBox="1419 1042 772 404" font-size="25" letter-spacing=".2">
          <rect x="1507" y="1058" width="674" height="342" fill="#fff"/>
          <path d="M1608 1058v342M1709.500 1058v342M1810.500 1058v342M2012 1058v342M2113 1058v342M1507 1134h674M1507 1171h674M1507 1208h674M1507 1282h674M1507 1319h674M1507 1356h674" stroke="#000" stroke-opacity=".15" stroke-width="1.500" fill="none"/>
          <path d="M1911.500 1058v342M1507 1097.500h674M1507 1245h674M1507 1392.500h674" stroke="#000" stroke-opacity=".42" stroke-width="1.500" fill="none"/>
          <path d="M1507 1074h25.500l3.500 310.500h605l3.500-306H2168" stroke="#987db7" stroke-width="2.500" fill="none"/>
          <path d="M1507 1074h26l6.500 310.500h601.500l6-306h21" stroke="#b7c866" stroke-width="2.500" fill="none"/>
          <rect x="1507" y="1058" width="674" height="342" fill="none" stroke="#111" stroke-width="2"/>
          <g text-anchor="end"><text x="1486" y="1112.500">73</text><text x="1486" y="1186">72.5</text><text x="1486" y="1260">72</text><text x="1486" y="1334">71.5</text><text x="1486" y="1408">71</text></g>
          <g text-anchor="middle"><text x="1507" y="1436">0 m</text><text x="1709.500" y="1436">5</text><text x="1912" y="1436">10</text><text x="2114" y="1436">15 m</text></g>
        </svg>
      </div>
    </div>
  </section>
  <div class="split v" style="width:14px;padding-left:3px"></div>

  <!-- Processing toolbox -->
  <section class="d-flex flex-column proc flex-shrink-0" style="width:352px">
    <div class="dockhead d-flex align-items-center"><span class="me-auto" style="letter-spacing:-.3px">Processing Toolbox</span><svg width="22" height="22" style="margin-right:6px"><use href="#float"/></svg><svg width="22" height="22" style="margin-right:3px"><use href="#close"/></svg></div>
    <div class="d-flex align-items-center" style="height:57px;padding:0 0 6px 5px">
      <a class="mini corner"><svg><use href="#gears"/></svg></a><a class="mini corner"><svg><use href="#python"/></svg></a><a class="mini"><svg><use href="#hist"/></svg></a><a class="mini"><svg><use href="#doc"/></svg></a><i class="vsep" style="height:22px;margin:0 5px 0 8px"></i><a class="mini"><svg><use href="#note"/></svg></a><i class="vsep" style="height:22px;margin:0 6px 0 7px"></i><a class="mini"><svg><use href="#wrench"/></svg></a>
    </div>
    <div class="field" style="height:44px;color:#868686;letter-spacing:.1px"><svg width="24" height="24" style="margin:0 16px 2px 15px"><use href="#mag"/></svg><span class="pt-1">Search...</span></div>
    <div class="pane d-flex" style="height:859px">
      <div class="flex-grow-1 overflow-hidden" style="padding-top:2px">
        <div class="trow"><span class="exp"><i class="rt"></i></span><span class="ico"><svg><use href="#qgis"/></svg></span>Check geometry</div>
        <div class="trow"><span class="exp"><i class="rt"></i></span><span class="ico"><svg><use href="#qgis"/></svg></span>Database</div>
        <div class="trow"><span class="exp"><i class="rt"></i></span><span class="ico"><svg><use href="#qgis"/></svg></span>File tools</div>
        <div class="trow"><span class="exp"><i class="rt"></i></span><span class="ico"><svg><use href="#qgis"/></svg></span>Fix geometry</div>
        <div class="trow"><span class="exp"><i class="rt"></i></span><span class="ico"><svg><use href="#qgis"/></svg></span>GPS</div>
        <div class="trow"><span class="exp"><i class="rt"></i></span><span class="ico"><svg><use href="#qgis"/></svg></span>Interpolation</div>
        <div class="trow"><span class="exp"><i class="rt"></i></span><span class="ico"><svg><use href="#qgis"/></svg></span>Layer tools</div>
        <div class="trow"><span class="exp"><i class="dn"></i></span><span class="ico"><svg><use href="#qgis"/></svg></span>Mesh</div>
        <div class="trow kid"><span class="exp"></span><span class="ico"><svg><use href="#gear"/></svg></span>Export contours</div>
        <div class="trow kid"><span class="exp"></span><span class="ico"><svg><use href="#gear"/></svg></span>Export cross sect...</div>
        <div class="trow kid"><span class="exp"></span><span class="ico"><svg><use href="#gear"/></svg></span>Export mesh edges</div>
        <div class="trow kid"><span class="exp"></span><span class="ico"><svg><use href="#gear"/></svg></span>Export mesh faces</div>
        <div class="trow kid"><span class="exp"></span><span class="ico"><svg><use href="#gear"/></svg></span>Export mesh on ...</div>
        <div class="trow kid"><span class="exp"></span><span class="ico"><svg><use href="#gear"/></svg></span>Export mesh vert...</div>
        <div class="trow kid"><span class="exp"></span><span class="ico"><svg><use href="#gear"/></svg></span>Export time serie...</div>
        <div class="trow kid" style="background:#efefef"><span class="exp"></span><span class="ico"><svg><use href="#gear"/></svg></span>Rasterize mesh d...</div>
        <div class="trow kid"><span class="exp"></span><span class="ico"><svg><use href="#gear"/></svg></span>Surface to polygon</div>
        <div class="trow kid"><span class="exp"></span><span class="ico"><svg><use href="#gear"/></svg></span>TIN Mesh Creation</div>
        <div class="trow"><span class="exp"><i class="rt"></i></span><span class="ico"><svg><use href="#qgis"/></svg></span>Metadata tools</div>
        <div class="trow"><span class="exp"><i class="rt"></i></span><span class="ico"><svg><use href="#qgis"/></svg></span>Network analysis</div>
        <div class="trow"><span class="exp"><i class="rt"></i></span><span class="ico"><svg><use href="#qgis"/></svg></span>Plots</div>
        <div class="trow"><span class="exp"><i class="rt"></i></span><span class="ico"><svg><use href="#qgis"/></svg></span>Point cloud conversion</div>
        <div class="trow"><span class="exp"><i class="rt"></i></span><span class="ico"><svg><use href="#qgis"/></svg></span>Point cloud data man...</div>
        <div class="trow"><span class="exp"><i class="rt"></i></span><span class="ico"><svg><use href="#qgis"/></svg></span>Point cloud extraction</div>
      </div>
      <div class="vbar"><span class="knob" style="height:27px;border-bottom:2px solid #bbb"><i class="up"></i></span><span style="height:54px"></span><span style="height:420px;border:solid #bbb;border-width:1.500px 0;background:linear-gradient(90deg,#fff,#f1f1f1)"></span><span class="flex-grow-1"></span><span class="knob" style="height:28px;border-top:2px solid #bbb"><i class="dn"></i></span></div>
    </div>
    <div class="d-flex align-items-start" style="padding-top:2px"><div class="dtab" style="width:123px;height:43px;padding:3px 4px 0 0;background:#dcdcdc">Brow...</div><div class="dtab" style="width:229px;height:47px;padding-top:5px;background:#f8f8f8;letter-spacing:.05px">Processing Toolb...</div></div>
  </section>
</main>

<footer class="status d-flex align-items-center flex-grow-1" style="padding:3px 0 0 8px">
  <div class="field" style="width:400px;height:43px;color:#7c7c7c;letter-spacing:.1px"><svg width="24" height="24" style="margin:0 17px 2px 15px"><use href="#mag"/></svg>Type to locate (Ctrl+K)</div>
  <span class="text-end" style="width:583px">Coordinate</span>
  <div class="field justify-content-center" style="width:273px;height:43px;margin-left:7px">1000005.77, 999975.90</div>
  <svg width="34" height="34" style="margin-left:8px"><use href="#mouse"/></svg>
  <span class="text-end" style="width:76px">Scale</span>
  <div class="field" style="width:161px;height:43px;margin-left:7px"><span class="flex-grow-1 ps-2">1:351</span><span class="knob align-self-stretch border-start" style="width:39px"><i class="dn"></i></span></div>
  <svg width="30" height="30" style="margin-left:22px"><use href="#lock"/></svg>
  <span class="text-end" style="width:104px">Magnifier</span>
  <div class="field" style="width:167px;height:40px;margin-left:7px"><span class="flex-grow-1 ps-2">100%</span><span class="spin"><i class="up"></i><i class="dn"></i></span></div>
  <span class="text-end" style="width:100px">Rotation</span>
  <div class="field" style="width:167px;height:40px;margin-left:19px"><span class="flex-grow-1 ps-2">0.0 °</span><span class="spin"><i class="up"></i><i class="dn"></i></span></div>
  <span class="ck" style="margin-left:13px"><svg><use href="#check"/></svg></span>
  <span style="width:100px;margin-left:10px">Render</span>
  <svg width="31" height="31"><use href="#wglobe"/></svg>
  <span style="width:155px;padding-left:4px">EPSG:3116</span>
  <svg width="32" height="32"><use href="#chat"/></svg>
</footer>
</body>
</html>
